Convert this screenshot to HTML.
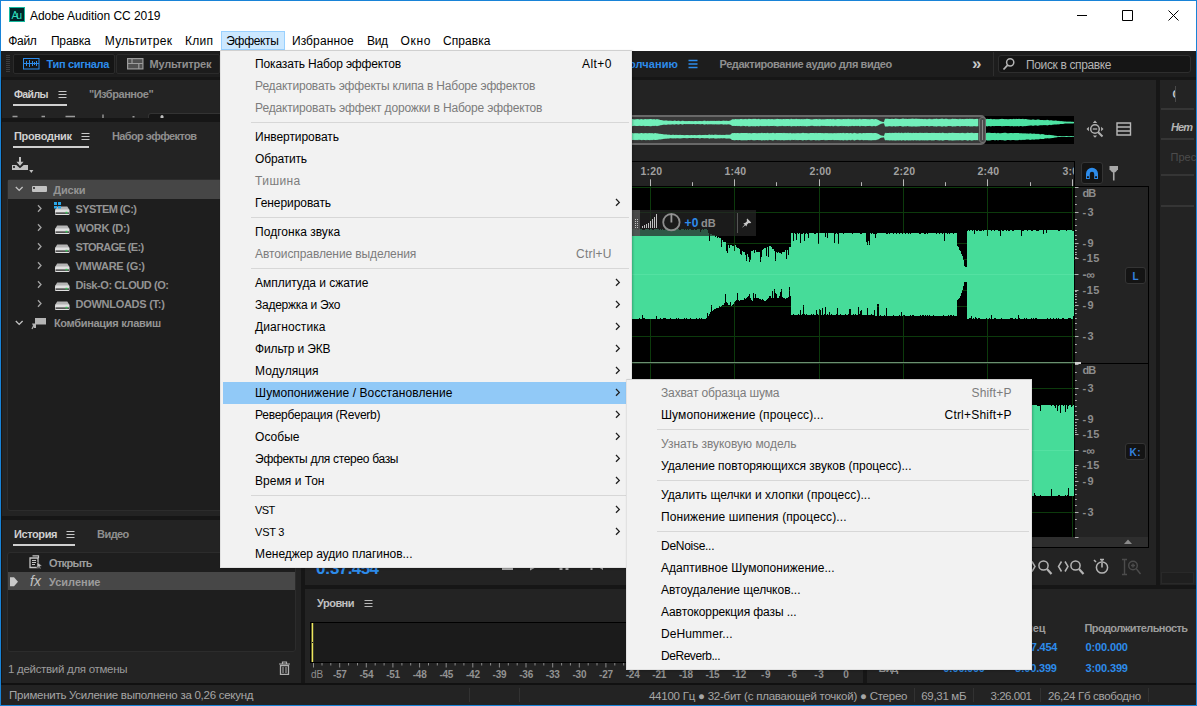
<!DOCTYPE html>
<html lang="ru"><head><meta charset="utf-8"><title>Adobe Audition CC 2019</title>
<style>
html,body{margin:0;padding:0;background:#161616;}
body{width:1197px;height:706px;overflow:hidden;font-family:"Liberation Sans",sans-serif;}
#app{position:relative;width:1197px;height:706px;overflow:hidden;background:#161616;}
#app div,#app svg,#app span.t{position:absolute;display:block;}
#app span.t{white-space:pre;line-height:1;}
#app div.clip{overflow:hidden;}

</style></head>
<body>
<div id="app">
<div style="left:0px;top:0px;width:1197px;height:51px;background:#ffffff;"></div>
<div style="left:9px;top:7px;width:16px;height:15px;background:#00262a;border:1px solid #15b89e;box-sizing:border-box;"></div>
<span class="t" style="left:11.50px;top:10.00px;font-size:10.5px;color:#2fdcbc;letter-spacing:-2.344px;">Au</span>
<span class="t" style="left:30.00px;top:10.00px;font-size:12px;color:#000;letter-spacing:-0.045px;">Adobe Audition CC 2019</span>
<svg style="left:1070px;top:5px;" width="118" height="20" viewBox="0 0 118 20"><path d="M7 10.500h10M52.500 5.500h10v10h-10zM98.500 5.500l10 10M108.500 5.500l-10 10" fill="none" stroke="#000" stroke-width="1"/></svg>
<div style="left:221px;top:31px;width:64px;height:19px;background:#cce8ff;border:1px solid #99d1ff;box-sizing:border-box;"></div>
<span class="t" style="left:8.30px;top:35.00px;font-size:12px;color:#000;letter-spacing:-0.339px;">Файл</span>
<span class="t" style="left:50.90px;top:35.00px;font-size:12px;color:#000;letter-spacing:-0.149px;">Правка</span>
<span class="t" style="left:104.80px;top:35.00px;font-size:12px;color:#000;letter-spacing:0.291px;">Мультитрек</span>
<span class="t" style="left:185.00px;top:35.00px;font-size:12px;color:#000;letter-spacing:0.266px;">Клип</span>
<span class="t" style="left:226.30px;top:35.00px;font-size:12px;color:#000;letter-spacing:-0.327px;">Эффекты</span>
<span class="t" style="left:291.90px;top:35.00px;font-size:12px;color:#000;letter-spacing:0.121px;">Избранное</span>
<span class="t" style="left:367.10px;top:35.00px;font-size:12px;color:#000;letter-spacing:-0.459px;">Вид</span>
<span class="t" style="left:400.50px;top:35.00px;font-size:12px;color:#000;letter-spacing:0.703px;">Окно</span>
<span class="t" style="left:443.00px;top:35.00px;font-size:12px;color:#000;letter-spacing:0.070px;">Справка</span>
<div style="left:1px;top:51px;width:1195px;height:654px;background:#161616;"></div>
<div style="left:1px;top:51px;width:1195px;height:26px;background:#1d1d1d;"></div>
<svg style="left:5px;top:54px;" width="6" height="20" viewBox="0 0 6 20"><path d="M1 1.5h4M1 3.5h4M1 5.5h4M1 7.5h4M1 9.5h4M1 11.5h4M1 13.5h4M1 15.5h4M1 17.5h4" stroke="#3c3c3c" stroke-width="1"/></svg>
<div style="left:13px;top:54px;width:102px;height:20px;background:#151515;border:1px solid #2b2b2b;border-radius:2px;box-sizing:border-box;"></div>
<div style="left:116px;top:54px;width:104px;height:20px;background:#1c1c1c;border:1px solid #2b2b2b;border-radius:2px;box-sizing:border-box;"></div>
<svg style="left:23px;top:58px;" width="17" height="12" viewBox="0 0 17 12"><rect x="0.5" y="0.5" width="15.5" height="10.5" fill="none" stroke="#2d8ceb"/><path d="M1 5.5h15M3.5 3v5M6.5 2v7M9.5 3v5M11.5 4v3M13.5 3v5" stroke="#2d8ceb" stroke-width="1" fill="none"/></svg>
<span class="t" style="left:46.50px;top:59.00px;font-size:11px;color:#2d8ceb;font-weight:700;letter-spacing:-0.329px;">Тип сигнала</span>
<svg style="left:127px;top:58px;" width="17" height="12" viewBox="0 0 17 12"><rect x="0.600" y="0.600" width="15.300" height="10.300" fill="#505050" stroke="#9c9c9c" stroke-width="1.200"/><path d="M0.600 5.500h15.300M5 0.600v4.900M11.800 5.500v5.400" stroke="#9c9c9c" stroke-width="1.200" fill="none"/></svg>
<span class="t" style="left:149.50px;top:59.00px;font-size:11px;color:#8f8f8f;font-weight:700;letter-spacing:-0.201px;">Мультитрек</span>
<span class="t" style="left:597.00px;top:59.00px;font-size:11px;color:#2d8ceb;font-weight:700;letter-spacing:0.070px;">По умолчанию</span>
<svg style="left:688px;top:59px;" width="10" height="10" viewBox="0 0 10 10"><path d="M0.5 1.5h9M0.5 5h9M0.5 8.5h9" stroke="#2d8ceb" stroke-width="1.3"/></svg>
<span class="t" style="left:719.50px;top:59.00px;font-size:11px;color:#8f8f8f;font-weight:700;letter-spacing:-0.423px;">Редактирование аудио для видео</span>
<span class="t" style="left:972.10px;top:55.00px;font-size:17px;color:#c8c8c8;font-weight:700;">»</span>
<div style="left:993px;top:52px;width:1px;height:24px;background:#2e2e2e;"></div>
<div style="left:998px;top:55px;width:193px;height:18px;background:#151515;border:1px solid #2e2e2e;border-radius:3px;box-sizing:border-box;"></div>
<svg style="left:1002px;top:57px;" width="14" height="14" viewBox="0 0 14 14"><circle cx="8.2" cy="5.3" r="3.6" fill="none" stroke="#b4b4b4" stroke-width="1.5"/><path d="M5.6 8.2L1.5 12.5" stroke="#b4b4b4" stroke-width="1.8"/></svg>
<span class="t" style="left:1026.00px;top:59.00px;font-size:12px;color:#b4b4b4;letter-spacing:-0.363px;">Поиск в справке</span>
<div style="left:2px;top:80px;width:299px;height:38px;background:#232323;"></div>
<span class="t" style="left:13.90px;top:89.00px;font-size:10.5px;color:#d0d0d0;font-weight:700;letter-spacing:-0.577px;">Файлы</span>
<svg style="left:57.5px;top:89.7px;" width="10" height="10" viewBox="0 0 10 10"><path d="M0.5 1.5h8M0.5 4.5h8M0.5 7.5h8" stroke="#c8c8c8" stroke-width="1"/></svg>
<span class="t" style="left:88.90px;top:89.00px;font-size:11px;color:#8f8f8f;font-weight:700;letter-spacing:-0.450px;">"Избранное"</span>
<div style="left:13px;top:104px;width:54px;height:2px;background:#d0d0d0;"></div>
<div style="left:148px;top:113px;width:154px;height:5px;background:#161616;border:1px solid #333;border-bottom:0;border-radius:3px 3px 0 0;box-sizing:border-box;"></div>
<svg style="left:10px;top:113px;" width="160" height="5" viewBox="0 0 160 5"><path d="M2.500 3.500h5M31.500 3.500h3.500M55.500 3.500h9.500M93 1.500v3.500M122.500 3.800h2" stroke="#9a9a9a" stroke-width="1.400"/><path d="M150.500 5v-1.500a1.500 1.500 0 0 1 3 0V5z" fill="#c0c0c0"/></svg>
<div style="left:2px;top:122px;width:299px;height:394px;background:#232323;"></div>
<span class="t" style="left:13.90px;top:131.00px;font-size:11px;color:#d0d0d0;font-weight:700;letter-spacing:-0.292px;">Проводник</span>
<svg style="left:80.5px;top:132px;" width="10" height="10" viewBox="0 0 10 10"><path d="M0.5 1.5h8M0.5 4.5h8M0.5 7.5h8" stroke="#c8c8c8" stroke-width="1"/></svg>
<span class="t" style="left:111.90px;top:131.00px;font-size:11px;color:#8f8f8f;font-weight:700;letter-spacing:-0.592px;">Набор эффектов</span>
<div style="left:13px;top:146px;width:76px;height:2px;background:#d0d0d0;"></div>
<svg style="left:11px;top:156px;" width="24" height="18" viewBox="0 0 24 18"><path d="M9 1v7" stroke="#c0c0c0" stroke-width="2" fill="none"/><path d="M5.500 5.700h7L9 9.900z" fill="#c0c0c0"/><path d="M1 8.900h4.300L9 12.200l3.700-3.300H17V14H1z" fill="#c0c0c0"/><rect x="2" y="10" width="2" height="2" fill="#3a3a3a"/><path d="M18.200 14h4.200l-2.100 3z" fill="#c0c0c0"/></svg>
<div style="left:7px;top:179px;width:289px;height:332px;background:#1e1e1e;border:1px solid #2c2c2c;border-radius:3px;box-sizing:border-box;"></div>
<div style="left:8px;top:180px;width:287px;height:19px;background:#464646;"></div>
<svg style="left:14.5px;top:186px;" width="9" height="6" viewBox="0 0 9 6"><path d="M0.800 1l3.400 3.400L7.600 1" fill="none" stroke="#c4c4c4" stroke-width="1.300"/></svg>
<div style="left:32px;top:186px;width:15px;height:6px;background:#c2c2c2;border-radius:1px;"></div>
<div style="left:33px;top:187px;width:2px;height:2px;background:#4a4a4a;"></div>
<span class="t" style="left:53.30px;top:185.00px;font-size:11px;color:#949494;font-weight:700;letter-spacing:-0.196px;">Диски</span>
<svg style="left:37px;top:204px;" width="6" height="9" viewBox="0 0 6 9"><path d="M1 1.200l3 3.300L1 7.800" fill="none" stroke="#a4a4a4" stroke-width="1.300"/></svg>
<svg style="left:55px;top:206px;" width="16" height="11" viewBox="0 0 16 11"><path d="M2.200 0.500h10.100l2.200 3.500H0z" fill="#b4b4b4"/><rect x="0" y="3.500" width="14.500" height="5.500" rx="1" fill="#e0e0e0"/><rect x="0.500" y="6.300" width="13.500" height="1.700" fill="#555"/><rect x="10.500" y="5.800" width="2" height="1.600" fill="#35c455"/></svg>
<svg style="left:54px;top:202px;" width="8" height="7" viewBox="0 0 8 7"><path d="M0 0h3v3H0zM4 0h3v3H4zM0 4h3v2.5H0zM4 4h3v2.5H4z" fill="#2aa7e8"/></svg>
<span class="t" style="left:75.50px;top:204.00px;font-size:11px;color:#949494;font-weight:700;letter-spacing:-0.573px;">SYSTEM (C:)</span>
<svg style="left:37px;top:223px;" width="6" height="9" viewBox="0 0 6 9"><path d="M1 1.200l3 3.300L1 7.800" fill="none" stroke="#a4a4a4" stroke-width="1.300"/></svg>
<svg style="left:55px;top:225px;" width="16" height="11" viewBox="0 0 16 11"><path d="M2.200 0.500h10.100l2.200 3.500H0z" fill="#b4b4b4"/><rect x="0" y="3.500" width="14.500" height="5.500" rx="1" fill="#e0e0e0"/><rect x="0.500" y="6.300" width="13.500" height="1.700" fill="#555"/><rect x="10.500" y="5.800" width="2" height="1.600" fill="#35c455"/></svg>
<span class="t" style="left:75.50px;top:223.00px;font-size:11px;color:#949494;font-weight:700;letter-spacing:-0.291px;">WORK (D:)</span>
<svg style="left:37px;top:242px;" width="6" height="9" viewBox="0 0 6 9"><path d="M1 1.200l3 3.300L1 7.800" fill="none" stroke="#a4a4a4" stroke-width="1.300"/></svg>
<svg style="left:55px;top:244px;" width="16" height="11" viewBox="0 0 16 11"><path d="M2.200 0.500h10.100l2.200 3.500H0z" fill="#b4b4b4"/><rect x="0" y="3.500" width="14.500" height="5.500" rx="1" fill="#e0e0e0"/><rect x="0.500" y="6.300" width="13.500" height="1.700" fill="#555"/><rect x="10.500" y="5.800" width="2" height="1.600" fill="#35c455"/></svg>
<span class="t" style="left:75.50px;top:242.00px;font-size:11px;color:#949494;font-weight:700;letter-spacing:-0.634px;">STORAGE (E:)</span>
<svg style="left:37px;top:261px;" width="6" height="9" viewBox="0 0 6 9"><path d="M1 1.200l3 3.300L1 7.800" fill="none" stroke="#a4a4a4" stroke-width="1.300"/></svg>
<svg style="left:55px;top:263px;" width="16" height="11" viewBox="0 0 16 11"><path d="M2.200 0.500h10.100l2.200 3.500H0z" fill="#b4b4b4"/><rect x="0" y="3.500" width="14.500" height="5.500" rx="1" fill="#e0e0e0"/><rect x="0.500" y="6.300" width="13.500" height="1.700" fill="#555"/><rect x="10.500" y="5.800" width="2" height="1.600" fill="#35c455"/></svg>
<span class="t" style="left:75.50px;top:261.00px;font-size:11px;color:#949494;font-weight:700;letter-spacing:-0.261px;">VMWARE (G:)</span>
<svg style="left:37px;top:280px;" width="6" height="9" viewBox="0 0 6 9"><path d="M1 1.200l3 3.300L1 7.800" fill="none" stroke="#a4a4a4" stroke-width="1.300"/></svg>
<svg style="left:55px;top:282px;" width="16" height="11" viewBox="0 0 16 11"><path d="M2.200 0.500h10.100l2.200 3.500H0z" fill="#b4b4b4"/><rect x="0" y="3.500" width="14.500" height="5.500" rx="1" fill="#e0e0e0"/><rect x="0.500" y="6.300" width="13.500" height="1.700" fill="#555"/><rect x="10.500" y="5.800" width="2" height="1.600" fill="#35c455"/></svg>
<span class="t" style="left:75.50px;top:280.00px;font-size:11px;color:#949494;font-weight:700;letter-spacing:-0.421px;">Disk-O: CLOUD (O:</span>
<svg style="left:37px;top:299px;" width="6" height="9" viewBox="0 0 6 9"><path d="M1 1.200l3 3.300L1 7.800" fill="none" stroke="#a4a4a4" stroke-width="1.300"/></svg>
<svg style="left:55px;top:301px;" width="16" height="11" viewBox="0 0 16 11"><path d="M2.200 0.500h10.100l2.200 3.500H0z" fill="#b4b4b4"/><rect x="0" y="3.500" width="14.500" height="5.500" rx="1" fill="#e0e0e0"/><rect x="0.500" y="6.300" width="13.500" height="1.700" fill="#555"/><rect x="10.500" y="5.800" width="2" height="1.600" fill="#35c455"/></svg>
<span class="t" style="left:75.50px;top:299.00px;font-size:11px;color:#949494;font-weight:700;letter-spacing:-0.275px;">DOWNLOADS (T:)</span>
<svg style="left:14.5px;top:320px;" width="9" height="6" viewBox="0 0 9 6"><path d="M0.800 1l3.400 3.400L7.600 1" fill="none" stroke="#c4c4c4" stroke-width="1.300"/></svg>
<svg style="left:31px;top:317px;" width="16" height="13" viewBox="0 0 16 13"><rect x="4" y="1" width="11" height="6.5" fill="#b4b4b4"/><path d="M1 6.5l4 0 0 4.5-2 0z" fill="#b4b4b4"/><path d="M1 12l1.5-3" stroke="#b4b4b4" stroke-width="1.3"/></svg>
<span class="t" style="left:53.90px;top:318.00px;font-size:11px;color:#949494;font-weight:700;letter-spacing:-0.303px;">Комбинация клавиш</span>
<div style="left:2px;top:520px;width:299px;height:163px;background:#232323;"></div>
<span class="t" style="left:13.90px;top:529.00px;font-size:11px;color:#d0d0d0;font-weight:700;letter-spacing:-0.382px;">История</span>
<svg style="left:66px;top:530px;" width="10" height="10" viewBox="0 0 10 10"><path d="M0.5 1.5h8M0.5 4.5h8M0.5 7.5h8" stroke="#c8c8c8" stroke-width="1"/></svg>
<span class="t" style="left:97.10px;top:529.00px;font-size:11px;color:#8f8f8f;font-weight:700;letter-spacing:-0.583px;">Видео</span>
<div style="left:13px;top:544px;width:62px;height:2px;background:#d0d0d0;"></div>
<div style="left:7px;top:552px;width:289px;height:100px;background:#1e1e1e;border:1px solid #2c2c2c;border-radius:3px;box-sizing:border-box;"></div>
<div style="left:8px;top:572px;width:287px;height:18px;background:#474747;"></div>
<svg style="left:29px;top:555px;" width="14" height="14" viewBox="0 0 14 14"><path d="M3.5 0.8h6v2.4" fill="none" stroke="#c4c4c4" stroke-width="1.2"/><path d="M1 3h8v9.5H1z" fill="none" stroke="#c4c4c4" stroke-width="1.3"/><path d="M3 5.5h4M3 7.5h4M3 9.5h3" stroke="#c4c4c4" stroke-width="1"/><path d="M8 7l5.2 4-2.4.3 1.2 2.2-1 .5-1.2-2.3L8 13z" fill="#c4c4c4" stroke="#1e1e1e" stroke-width="0.5"/></svg>
<span class="t" style="left:49.10px;top:558.00px;font-size:11px;color:#9c9c9c;font-weight:700;letter-spacing:-0.720px;">Открыть</span>
<svg style="left:10px;top:576.5px;" width="10" height="10" viewBox="0 0 10 10"><path d="M0 0.300h4L8 4.700 4 9.200H0z" fill="#c9c9c9"/></svg>
<span class="t" style="left:30.00px;top:574.00px;font-size:14px;color:#c0c0c0;font-style:italic;letter-spacing:0.109px;font-family:"Liberation Serif",serif;">fx</span>
<span class="t" style="left:49.10px;top:577.00px;font-size:11px;color:#9c9c9c;font-weight:700;letter-spacing:-0.017px;">Усиление</span>
<span class="t" style="left:8.00px;top:664.00px;font-size:11.5px;color:#9c9c9c;letter-spacing:-0.298px;">1 действий для отмены</span>
<svg style="left:278px;top:661px;" width="14" height="15" viewBox="0 0 14 15"><path d="M1 3h11M4.5 2.5v-1.5h4v1.5" fill="none" stroke="#b0b0b0" stroke-width="1.2"/><path d="M2.5 4.5h8v8.8h-8z" fill="none" stroke="#b0b0b0" stroke-width="1.3"/><path d="M5 6v6M8 6v6" stroke="#b0b0b0" stroke-width="1"/></svg>
<div style="left:305px;top:80px;width:851px;height:505px;background:#232323;"></div>
<div style="left:311px;top:116px;width:763px;height:28px;background:#000;"></div>
<svg style="left:0px;top:0px;" width="1197" height="160" viewBox="0 0 1197 160"><path d="M632.0 119.3 L633.0 119.5 L634.0 119.1 L635.0 119.5 L636.0 119.2 L637.0 119.3 L638.0 119.5 L639.0 119.2 L640.0 119.5 L641.0 119.3 L642.0 119.5 L643.0 119.5 L644.0 119.3 L645.0 119.0 L646.0 119.5 L647.0 119.4 L648.0 119.1 L649.0 118.9 L650.0 119.2 L651.0 119.3 L652.0 118.9 L653.0 119.5 L654.0 119.0 L655.0 119.4 L656.0 119.5 L657.0 119.5 L658.0 119.6 L659.0 119.5 L660.0 120.1 L661.0 120.1 L662.0 120.1 L663.0 120.4 L664.0 120.4 L665.0 120.8 L666.0 120.8 L667.0 120.8 L668.0 120.6 L669.0 120.8 L670.0 120.9 L671.0 120.7 L672.0 120.8 L673.0 121.0 L674.0 120.7 L675.0 120.8 L676.0 121.0 L677.0 120.9 L678.0 120.9 L679.0 120.7 L680.0 120.9 L681.0 121.1 L682.0 120.8 L683.0 121.3 L684.0 121.1 L685.0 121.0 L686.0 121.3 L687.0 121.1 L688.0 121.4 L689.0 121.1 L690.0 121.1 L691.0 121.1 L692.0 121.0 L693.0 121.2 L694.0 121.0 L695.0 121.0 L696.0 121.0 L697.0 121.1 L698.0 120.8 L699.0 120.8 L700.0 121.0 L701.0 120.9 L702.0 121.2 L703.0 120.8 L704.0 120.8 L705.0 120.6 L706.0 120.7 L707.0 121.0 L708.0 121.0 L709.0 120.8 L710.0 121.2 L711.0 120.9 L712.0 121.1 L713.0 121.1 L714.0 121.1 L715.0 120.7 L716.0 121.1 L717.0 121.0 L718.0 120.9 L719.0 120.6 L720.0 121.1 L721.0 120.9 L722.0 120.8 L723.0 120.6 L724.0 120.6 L725.0 120.6 L726.0 121.0 L727.0 120.9 L728.0 120.9 L729.0 120.6 L730.0 120.5 L731.0 120.2 L732.0 119.3 L733.0 119.3 L734.0 119.3 L735.0 119.1 L736.0 119.1 L737.0 119.3 L738.0 119.4 L739.0 119.2 L740.0 119.2 L741.0 119.1 L742.0 118.8 L743.0 119.0 L744.0 119.1 L745.0 119.0 L746.0 119.0 L747.0 119.4 L748.0 118.9 L749.0 118.9 L750.0 118.9 L751.0 118.9 L752.0 119.2 L753.0 119.2 L754.0 119.4 L755.0 119.0 L756.0 119.4 L757.0 119.4 L758.0 119.3 L759.0 119.3 L760.0 119.2 L761.0 119.4 L762.0 119.4 L763.0 119.4 L764.0 119.4 L765.0 119.2 L766.0 119.4 L767.0 118.9 L768.0 119.1 L769.0 119.4 L770.0 119.3 L771.0 119.2 L772.0 119.2 L773.0 119.4 L774.0 118.9 L775.0 118.8 L776.0 119.1 L777.0 119.1 L778.0 119.4 L779.0 119.4 L780.0 119.2 L781.0 119.3 L782.0 118.9 L783.0 119.3 L784.0 119.4 L785.0 118.8 L786.0 119.1 L787.0 119.4 L788.0 119.1 L789.0 119.4 L790.0 119.1 L791.0 118.8 L792.0 118.9 L793.0 119.0 L794.0 119.3 L795.0 119.2 L796.0 119.3 L797.0 118.9 L798.0 119.1 L799.0 118.9 L800.0 119.2 L801.0 119.3 L802.0 118.9 L803.0 118.8 L804.0 118.9 L805.0 118.9 L806.0 118.9 L807.0 119.0 L808.0 119.3 L809.0 119.1 L810.0 119.2 L811.0 119.4 L812.0 119.4 L813.0 119.3 L814.0 119.3 L815.0 119.0 L816.0 118.8 L817.0 119.2 L818.0 118.8 L819.0 118.8 L820.0 118.8 L821.0 119.2 L822.0 119.3 L823.0 119.3 L824.0 119.3 L825.0 119.3 L826.0 119.0 L827.0 118.9 L828.0 118.9 L829.0 119.1 L830.0 119.0 L831.0 118.9 L832.0 119.4 L833.0 119.0 L834.0 118.9 L835.0 118.9 L836.0 119.0 L837.0 119.1 L838.0 119.3 L839.0 118.9 L840.0 119.2 L841.0 118.9 L842.0 118.8 L843.0 119.2 L844.0 119.2 L845.0 118.8 L846.0 119.0 L847.0 119.3 L848.0 119.4 L849.0 119.4 L850.0 118.9 L851.0 118.9 L852.0 119.4 L853.0 118.9 L854.0 118.8 L855.0 119.0 L856.0 119.2 L857.0 119.1 L858.0 119.4 L859.0 119.4 L860.0 118.8 L861.0 119.0 L862.0 119.1 L863.0 118.8 L864.0 119.2 L865.0 118.9 L866.0 118.9 L867.0 119.3 L868.0 119.3 L869.0 119.3 L870.0 119.3 L871.0 119.1 L872.0 119.3 L873.0 119.2 L874.0 119.4 L875.0 118.9 L876.0 119.2 L877.0 119.6 L878.0 119.9 L879.0 120.1 L880.0 120.9 L881.0 121.0 L882.0 121.7 L883.0 121.7 L884.0 121.8 L885.0 119.2 L886.0 119.0 L887.0 119.1 L888.0 119.2 L889.0 118.7 L890.0 119.1 L891.0 118.9 L892.0 118.8 L893.0 118.9 L894.0 119.0 L895.0 118.9 L896.0 118.9 L897.0 118.7 L898.0 119.2 L899.0 118.9 L900.0 119.1 L901.0 119.1 L902.0 118.8 L903.0 118.9 L904.0 118.9 L905.0 118.8 L906.0 118.7 L907.0 119.0 L908.0 118.9 L909.0 118.9 L910.0 118.9 L911.0 118.8 L912.0 119.0 L913.0 118.9 L914.0 119.0 L915.0 118.7 L916.0 118.8 L917.0 118.7 L918.0 118.7 L919.0 119.1 L920.0 118.9 L921.0 118.7 L922.0 118.7 L923.0 119.2 L924.0 119.2 L925.0 119.0 L926.0 119.2 L927.0 119.1 L928.0 119.2 L929.0 118.8 L930.0 118.8 L931.0 118.7 L932.0 119.2 L933.0 118.8 L934.0 118.9 L935.0 119.2 L936.0 118.7 L937.0 118.7 L938.0 119.1 L939.0 118.7 L940.0 119.0 L941.0 119.0 L942.0 118.6 L943.0 118.8 L944.0 119.2 L945.0 119.0 L946.0 119.0 L947.0 119.1 L948.0 119.2 L949.0 119.1 L950.0 118.8 L951.0 119.3 L952.0 118.9 L953.0 119.0 L954.0 119.3 L955.0 119.1 L956.0 118.9 L957.0 119.0 L958.0 119.3 L959.0 118.7 L960.0 118.8 L961.0 118.7 L962.0 119.2 L963.0 119.1 L964.0 119.3 L965.0 118.8 L966.0 119.1 L967.0 119.2 L968.0 119.0 L969.0 118.7 L970.0 118.8 L971.0 119.1 L972.0 119.2 L973.0 118.7 L974.0 118.9 L975.0 118.9 L976.0 119.3 L977.0 119.3 L978.0 118.9 L979.0 119.0 L980.0 119.3 L981.0 118.7 L982.0 118.9 L983.0 118.8 L984.0 119.3 L985.0 118.8 L986.0 119.3 L987.0 118.8 L988.0 119.0 L989.0 119.1 L990.0 119.0 L991.0 118.7 L992.0 119.2 L993.0 119.2 L994.0 119.0 L995.0 119.2 L996.0 119.3 L997.0 119.2 L998.0 119.3 L999.0 119.2 L1000.0 119.1 L1001.0 119.1 L1002.0 118.8 L1003.0 119.1 L1004.0 119.0 L1005.0 119.2 L1006.0 119.1 L1007.0 119.3 L1008.0 119.2 L1009.0 119.3 L1010.0 118.9 L1011.0 119.0 L1012.0 119.2 L1013.0 119.0 L1014.0 118.7 L1015.0 119.3 L1016.0 118.8 L1017.0 119.1 L1018.0 119.0 L1019.0 118.8 L1020.0 119.1 L1021.0 119.1 L1022.0 119.0 L1023.0 118.8 L1024.0 119.3 L1025.0 119.0 L1026.0 119.1 L1027.0 119.2 L1028.0 119.4 L1029.0 119.4 L1030.0 119.7 L1031.0 119.7 L1032.0 119.7 L1033.0 119.3 L1034.0 119.7 L1035.0 119.8 L1036.0 119.9 L1037.0 119.4 L1038.0 119.4 L1039.0 119.6 L1040.0 119.9 L1041.0 119.9 L1042.0 120.0 L1043.0 119.9 L1044.0 120.2 L1045.0 120.0 L1046.0 120.2 L1047.0 119.8 L1048.0 119.9 L1049.0 120.2 L1050.0 120.4 L1051.0 120.0 L1052.0 120.5 L1053.0 120.5 L1054.0 120.8 L1055.0 120.6 L1056.0 120.6 L1057.0 120.7 L1058.0 120.9 L1059.0 120.8 L1060.0 121.2 L1061.0 121.1 L1062.0 121.3 L1063.0 121.2 L1064.0 121.5 L1065.0 121.6 L1066.0 121.6 L1067.0 121.7 L1068.0 121.6 L1069.0 121.7 L1070.0 121.6 L1071.0 121.7 L1072.0 121.7 L1073.0 121.7 L1074.0 121.9 L1074.0 123.3 L1073.0 123.5 L1072.0 123.5 L1071.0 123.5 L1070.0 123.6 L1069.0 123.5 L1068.0 123.6 L1067.0 123.5 L1066.0 123.6 L1065.0 123.6 L1064.0 123.7 L1063.0 124.0 L1062.0 123.9 L1061.0 124.1 L1060.0 124.0 L1059.0 124.4 L1058.0 124.3 L1057.0 124.5 L1056.0 124.6 L1055.0 124.6 L1054.0 124.4 L1053.0 124.7 L1052.0 124.7 L1051.0 125.2 L1050.0 124.8 L1049.0 125.0 L1048.0 125.3 L1047.0 125.4 L1046.0 125.0 L1045.0 125.2 L1044.0 125.0 L1043.0 125.3 L1042.0 125.2 L1041.0 125.3 L1040.0 125.3 L1039.0 125.6 L1038.0 125.8 L1037.0 125.8 L1036.0 125.3 L1035.0 125.4 L1034.0 125.5 L1033.0 125.9 L1032.0 125.5 L1031.0 125.5 L1030.0 125.5 L1029.0 125.8 L1028.0 125.8 L1027.0 126.0 L1026.0 126.1 L1025.0 126.2 L1024.0 125.9 L1023.0 126.4 L1022.0 126.2 L1021.0 126.1 L1020.0 126.1 L1019.0 126.4 L1018.0 126.2 L1017.0 126.1 L1016.0 126.4 L1015.0 125.9 L1014.0 126.5 L1013.0 126.2 L1012.0 126.0 L1011.0 126.2 L1010.0 126.3 L1009.0 125.9 L1008.0 126.0 L1007.0 125.9 L1006.0 126.1 L1005.0 126.0 L1004.0 126.2 L1003.0 126.1 L1002.0 126.4 L1001.0 126.1 L1000.0 126.1 L999.0 126.0 L998.0 125.9 L997.0 126.0 L996.0 125.9 L995.0 126.0 L994.0 126.2 L993.0 126.0 L992.0 126.0 L991.0 126.5 L990.0 126.2 L989.0 126.1 L988.0 126.2 L987.0 126.4 L986.0 125.9 L985.0 126.4 L984.0 125.9 L983.0 126.4 L982.0 126.3 L981.0 126.5 L980.0 125.9 L979.0 126.2 L978.0 126.3 L977.0 125.9 L976.0 125.9 L975.0 126.3 L974.0 126.3 L973.0 126.5 L972.0 126.0 L971.0 126.1 L970.0 126.4 L969.0 126.5 L968.0 126.2 L967.0 126.0 L966.0 126.1 L965.0 126.4 L964.0 125.9 L963.0 126.1 L962.0 126.0 L961.0 126.5 L960.0 126.4 L959.0 126.5 L958.0 125.9 L957.0 126.2 L956.0 126.3 L955.0 126.1 L954.0 125.9 L953.0 126.2 L952.0 126.3 L951.0 125.9 L950.0 126.4 L949.0 126.1 L948.0 126.0 L947.0 126.1 L946.0 126.2 L945.0 126.2 L944.0 126.0 L943.0 126.4 L942.0 126.6 L941.0 126.2 L940.0 126.2 L939.0 126.5 L938.0 126.1 L937.0 126.5 L936.0 126.5 L935.0 126.0 L934.0 126.3 L933.0 126.4 L932.0 126.0 L931.0 126.5 L930.0 126.4 L929.0 126.4 L928.0 126.0 L927.0 126.1 L926.0 126.0 L925.0 126.2 L924.0 126.0 L923.0 126.0 L922.0 126.5 L921.0 126.5 L920.0 126.3 L919.0 126.1 L918.0 126.5 L917.0 126.5 L916.0 126.4 L915.0 126.5 L914.0 126.2 L913.0 126.3 L912.0 126.2 L911.0 126.4 L910.0 126.3 L909.0 126.3 L908.0 126.3 L907.0 126.2 L906.0 126.5 L905.0 126.4 L904.0 126.3 L903.0 126.3 L902.0 126.4 L901.0 126.1 L900.0 126.1 L899.0 126.3 L898.0 126.0 L897.0 126.5 L896.0 126.3 L895.0 126.3 L894.0 126.2 L893.0 126.3 L892.0 126.4 L891.0 126.3 L890.0 126.1 L889.0 126.5 L888.0 126.0 L887.0 126.1 L886.0 126.2 L885.0 126.0 L884.0 123.4 L883.0 123.5 L882.0 123.5 L881.0 124.2 L880.0 124.3 L879.0 125.1 L878.0 125.3 L877.0 125.6 L876.0 126.0 L875.0 126.3 L874.0 125.8 L873.0 126.0 L872.0 125.9 L871.0 126.1 L870.0 125.9 L869.0 125.9 L868.0 125.9 L867.0 125.9 L866.0 126.3 L865.0 126.3 L864.0 126.0 L863.0 126.4 L862.0 126.1 L861.0 126.2 L860.0 126.4 L859.0 125.8 L858.0 125.8 L857.0 126.1 L856.0 126.0 L855.0 126.2 L854.0 126.4 L853.0 126.3 L852.0 125.8 L851.0 126.3 L850.0 126.3 L849.0 125.8 L848.0 125.8 L847.0 125.9 L846.0 126.2 L845.0 126.4 L844.0 126.0 L843.0 126.0 L842.0 126.4 L841.0 126.3 L840.0 126.0 L839.0 126.3 L838.0 125.9 L837.0 126.1 L836.0 126.2 L835.0 126.3 L834.0 126.3 L833.0 126.2 L832.0 125.8 L831.0 126.3 L830.0 126.2 L829.0 126.1 L828.0 126.3 L827.0 126.3 L826.0 126.2 L825.0 125.9 L824.0 125.9 L823.0 125.9 L822.0 125.9 L821.0 126.0 L820.0 126.4 L819.0 126.4 L818.0 126.4 L817.0 126.0 L816.0 126.4 L815.0 126.2 L814.0 125.9 L813.0 125.9 L812.0 125.8 L811.0 125.8 L810.0 126.0 L809.0 126.1 L808.0 125.9 L807.0 126.2 L806.0 126.3 L805.0 126.3 L804.0 126.3 L803.0 126.4 L802.0 126.3 L801.0 125.9 L800.0 126.0 L799.0 126.3 L798.0 126.1 L797.0 126.3 L796.0 125.9 L795.0 126.0 L794.0 125.9 L793.0 126.2 L792.0 126.3 L791.0 126.4 L790.0 126.1 L789.0 125.8 L788.0 126.1 L787.0 125.8 L786.0 126.1 L785.0 126.4 L784.0 125.8 L783.0 125.9 L782.0 126.3 L781.0 125.9 L780.0 126.0 L779.0 125.8 L778.0 125.8 L777.0 126.1 L776.0 126.1 L775.0 126.4 L774.0 126.3 L773.0 125.8 L772.0 126.0 L771.0 126.0 L770.0 125.9 L769.0 125.8 L768.0 126.1 L767.0 126.3 L766.0 125.8 L765.0 126.0 L764.0 125.8 L763.0 125.8 L762.0 125.8 L761.0 125.8 L760.0 126.0 L759.0 125.9 L758.0 125.9 L757.0 125.8 L756.0 125.8 L755.0 126.2 L754.0 125.8 L753.0 126.0 L752.0 126.0 L751.0 126.3 L750.0 126.3 L749.0 126.3 L748.0 126.3 L747.0 125.8 L746.0 126.2 L745.0 126.2 L744.0 126.1 L743.0 126.2 L742.0 126.4 L741.0 126.1 L740.0 126.0 L739.0 126.0 L738.0 125.8 L737.0 125.9 L736.0 126.1 L735.0 126.1 L734.0 125.9 L733.0 125.9 L732.0 125.9 L731.0 125.0 L730.0 124.7 L729.0 124.6 L728.0 124.3 L727.0 124.3 L726.0 124.2 L725.0 124.6 L724.0 124.6 L723.0 124.6 L722.0 124.4 L721.0 124.3 L720.0 124.1 L719.0 124.6 L718.0 124.3 L717.0 124.2 L716.0 124.1 L715.0 124.5 L714.0 124.1 L713.0 124.1 L712.0 124.1 L711.0 124.3 L710.0 124.0 L709.0 124.4 L708.0 124.2 L707.0 124.2 L706.0 124.5 L705.0 124.6 L704.0 124.4 L703.0 124.4 L702.0 124.0 L701.0 124.3 L700.0 124.2 L699.0 124.4 L698.0 124.4 L697.0 124.1 L696.0 124.2 L695.0 124.2 L694.0 124.2 L693.0 124.0 L692.0 124.2 L691.0 124.1 L690.0 124.1 L689.0 124.1 L688.0 123.8 L687.0 124.1 L686.0 123.9 L685.0 124.2 L684.0 124.1 L683.0 123.9 L682.0 124.4 L681.0 124.1 L680.0 124.3 L679.0 124.5 L678.0 124.3 L677.0 124.3 L676.0 124.2 L675.0 124.4 L674.0 124.5 L673.0 124.2 L672.0 124.4 L671.0 124.5 L670.0 124.3 L669.0 124.4 L668.0 124.6 L667.0 124.4 L666.0 124.4 L665.0 124.4 L664.0 124.8 L663.0 124.8 L662.0 125.1 L661.0 125.1 L660.0 125.1 L659.0 125.7 L658.0 125.6 L657.0 125.7 L656.0 125.7 L655.0 125.8 L654.0 126.2 L653.0 125.7 L652.0 126.3 L651.0 125.9 L650.0 126.0 L649.0 126.3 L648.0 126.1 L647.0 125.8 L646.0 125.7 L645.0 126.2 L644.0 125.9 L643.0 125.7 L642.0 125.7 L641.0 125.9 L640.0 125.7 L639.0 126.0 L638.0 125.7 L637.0 125.9 L636.0 126.0 L635.0 125.7 L634.0 126.1 L633.0 125.7 L632.0 125.9Z" fill="#4de3a3"/><path d="M632.0 133.3 L633.0 132.9 L634.0 133.5 L635.0 133.1 L636.0 133.1 L637.0 133.5 L638.0 133.0 L639.0 133.0 L640.0 133.1 L641.0 133.1 L642.0 133.0 L643.0 133.5 L644.0 133.2 L645.0 133.2 L646.0 133.0 L647.0 133.0 L648.0 133.0 L649.0 133.2 L650.0 133.0 L651.0 133.1 L652.0 133.1 L653.0 133.4 L654.0 133.5 L655.0 133.5 L656.0 133.3 L657.0 133.5 L658.0 133.2 L659.0 133.6 L660.0 133.8 L661.0 134.0 L662.0 134.1 L663.0 134.3 L664.0 134.7 L665.0 134.3 L666.0 134.4 L667.0 134.6 L668.0 134.7 L669.0 134.6 L670.0 135.0 L671.0 134.6 L672.0 135.0 L673.0 135.1 L674.0 135.0 L675.0 134.7 L676.0 135.1 L677.0 134.8 L678.0 134.7 L679.0 135.0 L680.0 135.0 L681.0 135.0 L682.0 134.9 L683.0 134.9 L684.0 135.0 L685.0 135.0 L686.0 135.3 L687.0 135.3 L688.0 135.3 L689.0 135.1 L690.0 135.3 L691.0 135.1 L692.0 135.4 L693.0 135.4 L694.0 135.2 L695.0 135.0 L696.0 135.0 L697.0 135.0 L698.0 135.1 L699.0 135.0 L700.0 135.0 L701.0 135.0 L702.0 135.2 L703.0 134.7 L704.0 135.1 L705.0 134.6 L706.0 134.6 L707.0 135.2 L708.0 134.9 L709.0 134.7 L710.0 134.6 L711.0 134.9 L712.0 135.0 L713.0 135.1 L714.0 134.6 L715.0 135.0 L716.0 134.8 L717.0 135.1 L718.0 134.8 L719.0 134.6 L720.0 135.1 L721.0 134.7 L722.0 134.8 L723.0 134.6 L724.0 134.7 L725.0 135.0 L726.0 134.6 L727.0 134.8 L728.0 135.1 L729.0 135.1 L730.0 134.8 L731.0 134.0 L732.0 133.3 L733.0 133.4 L734.0 133.2 L735.0 133.2 L736.0 132.9 L737.0 133.4 L738.0 133.0 L739.0 132.9 L740.0 133.4 L741.0 132.8 L742.0 133.0 L743.0 132.9 L744.0 133.3 L745.0 133.2 L746.0 133.2 L747.0 132.8 L748.0 133.1 L749.0 133.2 L750.0 133.2 L751.0 133.3 L752.0 133.4 L753.0 133.4 L754.0 132.9 L755.0 133.3 L756.0 132.8 L757.0 133.3 L758.0 133.3 L759.0 133.1 L760.0 133.3 L761.0 133.2 L762.0 132.8 L763.0 132.9 L764.0 132.9 L765.0 133.0 L766.0 132.9 L767.0 132.8 L768.0 133.1 L769.0 133.0 L770.0 133.4 L771.0 133.0 L772.0 133.2 L773.0 133.0 L774.0 133.0 L775.0 133.3 L776.0 133.4 L777.0 132.8 L778.0 133.4 L779.0 133.1 L780.0 133.2 L781.0 133.3 L782.0 133.0 L783.0 132.8 L784.0 133.3 L785.0 133.0 L786.0 133.3 L787.0 133.1 L788.0 133.2 L789.0 133.3 L790.0 133.3 L791.0 133.3 L792.0 132.9 L793.0 133.1 L794.0 133.3 L795.0 132.9 L796.0 132.8 L797.0 133.2 L798.0 133.4 L799.0 133.3 L800.0 133.4 L801.0 133.2 L802.0 133.4 L803.0 133.3 L804.0 133.3 L805.0 133.1 L806.0 132.9 L807.0 133.0 L808.0 133.2 L809.0 133.2 L810.0 133.1 L811.0 133.2 L812.0 133.2 L813.0 133.4 L814.0 133.3 L815.0 132.8 L816.0 133.4 L817.0 133.1 L818.0 133.0 L819.0 132.9 L820.0 133.3 L821.0 133.3 L822.0 133.3 L823.0 133.2 L824.0 133.2 L825.0 132.8 L826.0 132.9 L827.0 132.9 L828.0 133.4 L829.0 133.4 L830.0 133.0 L831.0 132.9 L832.0 133.1 L833.0 133.1 L834.0 133.4 L835.0 133.2 L836.0 132.8 L837.0 132.9 L838.0 132.9 L839.0 132.8 L840.0 133.3 L841.0 133.4 L842.0 133.3 L843.0 133.1 L844.0 133.0 L845.0 132.8 L846.0 133.0 L847.0 133.0 L848.0 133.0 L849.0 133.2 L850.0 133.1 L851.0 133.4 L852.0 132.9 L853.0 133.3 L854.0 132.9 L855.0 133.0 L856.0 133.3 L857.0 133.4 L858.0 133.3 L859.0 133.0 L860.0 133.0 L861.0 133.4 L862.0 133.4 L863.0 133.1 L864.0 133.1 L865.0 133.2 L866.0 133.3 L867.0 133.1 L868.0 133.4 L869.0 133.3 L870.0 133.2 L871.0 132.8 L872.0 133.0 L873.0 132.9 L874.0 133.1 L875.0 133.3 L876.0 133.3 L877.0 133.2 L878.0 133.8 L879.0 134.5 L880.0 135.1 L881.0 135.2 L882.0 135.6 L883.0 135.8 L884.0 135.9 L885.0 132.8 L886.0 132.6 L887.0 133.1 L888.0 133.2 L889.0 133.0 L890.0 133.0 L891.0 132.8 L892.0 133.1 L893.0 132.7 L894.0 132.8 L895.0 132.9 L896.0 133.1 L897.0 132.6 L898.0 133.1 L899.0 132.7 L900.0 133.1 L901.0 133.1 L902.0 132.8 L903.0 133.1 L904.0 132.6 L905.0 132.9 L906.0 133.1 L907.0 133.1 L908.0 133.0 L909.0 132.8 L910.0 132.7 L911.0 133.2 L912.0 133.0 L913.0 133.1 L914.0 132.6 L915.0 133.2 L916.0 133.2 L917.0 133.2 L918.0 133.0 L919.0 132.7 L920.0 132.7 L921.0 132.8 L922.0 132.6 L923.0 132.7 L924.0 133.1 L925.0 133.2 L926.0 132.7 L927.0 132.8 L928.0 133.3 L929.0 132.9 L930.0 133.0 L931.0 133.0 L932.0 133.1 L933.0 133.2 L934.0 133.3 L935.0 133.1 L936.0 133.1 L937.0 132.7 L938.0 133.2 L939.0 132.7 L940.0 133.2 L941.0 133.1 L942.0 132.8 L943.0 132.8 L944.0 133.0 L945.0 133.3 L946.0 133.0 L947.0 133.1 L948.0 132.7 L949.0 133.2 L950.0 133.1 L951.0 132.7 L952.0 133.3 L953.0 133.0 L954.0 132.8 L955.0 132.8 L956.0 133.3 L957.0 133.3 L958.0 133.3 L959.0 132.7 L960.0 133.1 L961.0 132.8 L962.0 132.7 L963.0 133.1 L964.0 133.1 L965.0 132.7 L966.0 132.9 L967.0 133.1 L968.0 132.8 L969.0 133.1 L970.0 133.1 L971.0 133.3 L972.0 132.8 L973.0 132.7 L974.0 132.9 L975.0 132.7 L976.0 133.3 L977.0 133.2 L978.0 133.0 L979.0 132.7 L980.0 132.7 L981.0 133.1 L982.0 133.2 L983.0 133.0 L984.0 133.0 L985.0 132.7 L986.0 133.2 L987.0 132.8 L988.0 132.8 L989.0 132.8 L990.0 132.8 L991.0 132.9 L992.0 133.1 L993.0 133.1 L994.0 133.1 L995.0 132.8 L996.0 133.3 L997.0 133.2 L998.0 132.8 L999.0 133.2 L1000.0 133.3 L1001.0 133.3 L1002.0 133.0 L1003.0 133.1 L1004.0 132.7 L1005.0 132.8 L1006.0 132.7 L1007.0 133.2 L1008.0 133.3 L1009.0 133.3 L1010.0 133.0 L1011.0 132.9 L1012.0 133.1 L1013.0 133.2 L1014.0 133.1 L1015.0 132.9 L1016.0 132.9 L1017.0 132.9 L1018.0 132.9 L1019.0 133.1 L1020.0 133.4 L1021.0 133.0 L1022.0 133.4 L1023.0 133.3 L1024.0 133.4 L1025.0 133.2 L1026.0 133.6 L1027.0 133.6 L1028.0 133.6 L1029.0 133.7 L1030.0 133.3 L1031.0 133.5 L1032.0 133.7 L1033.0 133.7 L1034.0 133.4 L1035.0 133.7 L1036.0 134.0 L1037.0 133.7 L1038.0 133.9 L1039.0 133.8 L1040.0 134.4 L1041.0 134.3 L1042.0 134.1 L1043.0 134.2 L1044.0 134.2 L1045.0 134.9 L1046.0 134.8 L1047.0 135.0 L1048.0 135.0 L1049.0 134.7 L1050.0 135.0 L1051.0 134.9 L1052.0 135.3 L1053.0 135.2 L1054.0 135.5 L1055.0 135.7 L1056.0 135.7 L1057.0 135.9 L1058.0 136.2 L1059.0 136.1 L1060.0 136.1 L1061.0 136.2 L1062.0 136.2 L1063.0 136.2 L1064.0 136.2 L1065.0 136.2 L1066.0 136.1 L1067.0 136.1 L1068.0 136.2 L1069.0 136.2 L1070.0 136.2 L1071.0 136.1 L1072.0 136.2 L1073.0 136.2 L1074.0 136.2 L1074.0 137.0 L1073.0 137.0 L1072.0 137.0 L1071.0 137.1 L1070.0 137.0 L1069.0 137.0 L1068.0 137.0 L1067.0 137.1 L1066.0 137.1 L1065.0 137.0 L1064.0 137.0 L1063.0 137.0 L1062.0 137.0 L1061.0 137.0 L1060.0 137.1 L1059.0 137.1 L1058.0 137.0 L1057.0 137.3 L1056.0 137.5 L1055.0 137.5 L1054.0 137.7 L1053.0 138.0 L1052.0 137.9 L1051.0 138.3 L1050.0 138.2 L1049.0 138.5 L1048.0 138.2 L1047.0 138.2 L1046.0 138.4 L1045.0 138.3 L1044.0 139.0 L1043.0 139.0 L1042.0 139.1 L1041.0 138.9 L1040.0 138.8 L1039.0 139.4 L1038.0 139.3 L1037.0 139.5 L1036.0 139.2 L1035.0 139.5 L1034.0 139.8 L1033.0 139.5 L1032.0 139.5 L1031.0 139.7 L1030.0 139.9 L1029.0 139.5 L1028.0 139.6 L1027.0 139.6 L1026.0 139.6 L1025.0 140.0 L1024.0 139.8 L1023.0 139.9 L1022.0 139.8 L1021.0 140.2 L1020.0 139.8 L1019.0 140.1 L1018.0 140.3 L1017.0 140.3 L1016.0 140.3 L1015.0 140.3 L1014.0 140.1 L1013.0 140.0 L1012.0 140.1 L1011.0 140.3 L1010.0 140.2 L1009.0 139.9 L1008.0 139.9 L1007.0 140.0 L1006.0 140.5 L1005.0 140.4 L1004.0 140.5 L1003.0 140.1 L1002.0 140.2 L1001.0 139.9 L1000.0 139.9 L999.0 140.0 L998.0 140.4 L997.0 140.0 L996.0 139.9 L995.0 140.4 L994.0 140.1 L993.0 140.1 L992.0 140.1 L991.0 140.3 L990.0 140.4 L989.0 140.4 L988.0 140.4 L987.0 140.4 L986.0 140.0 L985.0 140.5 L984.0 140.2 L983.0 140.2 L982.0 140.0 L981.0 140.1 L980.0 140.5 L979.0 140.5 L978.0 140.2 L977.0 140.0 L976.0 139.9 L975.0 140.5 L974.0 140.3 L973.0 140.5 L972.0 140.4 L971.0 139.9 L970.0 140.1 L969.0 140.1 L968.0 140.4 L967.0 140.1 L966.0 140.3 L965.0 140.5 L964.0 140.1 L963.0 140.1 L962.0 140.5 L961.0 140.4 L960.0 140.1 L959.0 140.5 L958.0 139.9 L957.0 139.9 L956.0 139.9 L955.0 140.4 L954.0 140.4 L953.0 140.2 L952.0 139.9 L951.0 140.5 L950.0 140.1 L949.0 140.0 L948.0 140.5 L947.0 140.1 L946.0 140.2 L945.0 139.9 L944.0 140.2 L943.0 140.4 L942.0 140.4 L941.0 140.1 L940.0 140.0 L939.0 140.5 L938.0 140.0 L937.0 140.5 L936.0 140.1 L935.0 140.1 L934.0 139.9 L933.0 140.0 L932.0 140.1 L931.0 140.2 L930.0 140.2 L929.0 140.3 L928.0 139.9 L927.0 140.4 L926.0 140.5 L925.0 140.0 L924.0 140.1 L923.0 140.5 L922.0 140.6 L921.0 140.4 L920.0 140.5 L919.0 140.5 L918.0 140.2 L917.0 140.0 L916.0 140.0 L915.0 140.0 L914.0 140.6 L913.0 140.1 L912.0 140.2 L911.0 140.0 L910.0 140.5 L909.0 140.4 L908.0 140.2 L907.0 140.1 L906.0 140.1 L905.0 140.3 L904.0 140.6 L903.0 140.1 L902.0 140.4 L901.0 140.1 L900.0 140.1 L899.0 140.5 L898.0 140.1 L897.0 140.6 L896.0 140.1 L895.0 140.3 L894.0 140.4 L893.0 140.5 L892.0 140.1 L891.0 140.4 L890.0 140.2 L889.0 140.2 L888.0 140.0 L887.0 140.1 L886.0 140.6 L885.0 140.4 L884.0 137.3 L883.0 137.4 L882.0 137.6 L881.0 138.0 L880.0 138.1 L879.0 138.7 L878.0 139.4 L877.0 140.0 L876.0 139.9 L875.0 139.9 L874.0 140.1 L873.0 140.3 L872.0 140.2 L871.0 140.4 L870.0 140.0 L869.0 139.9 L868.0 139.8 L867.0 140.1 L866.0 139.9 L865.0 140.0 L864.0 140.1 L863.0 140.1 L862.0 139.8 L861.0 139.8 L860.0 140.2 L859.0 140.2 L858.0 139.9 L857.0 139.8 L856.0 139.9 L855.0 140.2 L854.0 140.3 L853.0 139.9 L852.0 140.3 L851.0 139.8 L850.0 140.1 L849.0 140.0 L848.0 140.2 L847.0 140.2 L846.0 140.2 L845.0 140.4 L844.0 140.2 L843.0 140.1 L842.0 139.9 L841.0 139.8 L840.0 139.9 L839.0 140.4 L838.0 140.3 L837.0 140.3 L836.0 140.4 L835.0 140.0 L834.0 139.8 L833.0 140.1 L832.0 140.1 L831.0 140.3 L830.0 140.2 L829.0 139.8 L828.0 139.8 L827.0 140.3 L826.0 140.3 L825.0 140.4 L824.0 140.0 L823.0 140.0 L822.0 139.9 L821.0 139.9 L820.0 139.9 L819.0 140.3 L818.0 140.2 L817.0 140.1 L816.0 139.8 L815.0 140.4 L814.0 139.9 L813.0 139.8 L812.0 140.0 L811.0 140.0 L810.0 140.1 L809.0 140.0 L808.0 140.0 L807.0 140.2 L806.0 140.3 L805.0 140.1 L804.0 139.9 L803.0 139.9 L802.0 139.8 L801.0 140.0 L800.0 139.8 L799.0 139.9 L798.0 139.8 L797.0 140.0 L796.0 140.4 L795.0 140.3 L794.0 139.9 L793.0 140.1 L792.0 140.3 L791.0 139.9 L790.0 139.9 L789.0 139.9 L788.0 140.0 L787.0 140.1 L786.0 139.9 L785.0 140.2 L784.0 139.9 L783.0 140.4 L782.0 140.2 L781.0 139.9 L780.0 140.0 L779.0 140.1 L778.0 139.8 L777.0 140.4 L776.0 139.8 L775.0 139.9 L774.0 140.2 L773.0 140.2 L772.0 140.0 L771.0 140.2 L770.0 139.8 L769.0 140.2 L768.0 140.1 L767.0 140.4 L766.0 140.3 L765.0 140.2 L764.0 140.3 L763.0 140.3 L762.0 140.4 L761.0 140.0 L760.0 139.9 L759.0 140.1 L758.0 139.9 L757.0 139.9 L756.0 140.4 L755.0 139.9 L754.0 140.3 L753.0 139.8 L752.0 139.8 L751.0 139.9 L750.0 140.0 L749.0 140.0 L748.0 140.1 L747.0 140.4 L746.0 140.0 L745.0 140.0 L744.0 139.9 L743.0 140.3 L742.0 140.2 L741.0 140.4 L740.0 139.8 L739.0 140.3 L738.0 140.2 L737.0 139.8 L736.0 140.3 L735.0 140.0 L734.0 140.0 L733.0 139.8 L732.0 139.9 L731.0 139.2 L730.0 138.4 L729.0 138.1 L728.0 138.1 L727.0 138.4 L726.0 138.6 L725.0 138.2 L724.0 138.5 L723.0 138.6 L722.0 138.4 L721.0 138.5 L720.0 138.1 L719.0 138.6 L718.0 138.4 L717.0 138.1 L716.0 138.4 L715.0 138.2 L714.0 138.6 L713.0 138.1 L712.0 138.2 L711.0 138.3 L710.0 138.6 L709.0 138.5 L708.0 138.3 L707.0 138.0 L706.0 138.6 L705.0 138.6 L704.0 138.1 L703.0 138.5 L702.0 138.0 L701.0 138.2 L700.0 138.2 L699.0 138.2 L698.0 138.1 L697.0 138.2 L696.0 138.2 L695.0 138.2 L694.0 138.0 L693.0 137.8 L692.0 137.8 L691.0 138.1 L690.0 137.9 L689.0 138.1 L688.0 137.9 L687.0 137.9 L686.0 137.9 L685.0 138.2 L684.0 138.2 L683.0 138.3 L682.0 138.3 L681.0 138.2 L680.0 138.2 L679.0 138.2 L678.0 138.5 L677.0 138.4 L676.0 138.1 L675.0 138.5 L674.0 138.2 L673.0 138.1 L672.0 138.2 L671.0 138.6 L670.0 138.2 L669.0 138.6 L668.0 138.5 L667.0 138.6 L666.0 138.8 L665.0 138.9 L664.0 138.5 L663.0 138.9 L662.0 139.1 L661.0 139.2 L660.0 139.4 L659.0 139.6 L658.0 140.0 L657.0 139.7 L656.0 139.9 L655.0 139.7 L654.0 139.7 L653.0 139.8 L652.0 140.1 L651.0 140.1 L650.0 140.2 L649.0 140.0 L648.0 140.2 L647.0 140.2 L646.0 140.2 L645.0 140.0 L644.0 140.0 L643.0 139.7 L642.0 140.2 L641.0 140.1 L640.0 140.1 L639.0 140.2 L638.0 140.2 L637.0 139.7 L636.0 140.1 L635.0 140.1 L634.0 139.7 L633.0 140.3 L632.0 139.9Z" fill="#4de3a3"/></svg>
<div style="left:311px;top:115px;width:675px;height:30px;background:rgba(72,72,72,0.78);border:2px solid #686868;border-radius:5px;box-sizing:border-box;"></div>
<svg style="left:0px;top:0px;" width="1197" height="160" viewBox="0 0 1197 160"><path d="M632.0 119.0 L633.0 119.2 L634.0 119.5 L635.0 119.5 L636.0 119.3 L637.0 119.2 L638.0 119.1 L639.0 119.5 L640.0 119.4 L641.0 119.1 L642.0 119.3 L643.0 119.4 L644.0 119.4 L645.0 118.9 L646.0 119.3 L647.0 119.2 L648.0 119.3 L649.0 119.3 L650.0 119.0 L651.0 118.9 L652.0 119.3 L653.0 119.4 L654.0 119.1 L655.0 119.4 L656.0 119.5 L657.0 119.0 L658.0 119.5 L659.0 119.5 L660.0 120.0 L661.0 119.9 L662.0 120.2 L663.0 120.5 L664.0 120.7 L665.0 120.4 L666.0 120.5 L667.0 120.4 L668.0 121.0 L669.0 120.7 L670.0 120.8 L671.0 120.8 L672.0 121.0 L673.0 121.0 L674.0 120.8 L675.0 120.6 L676.0 121.1 L677.0 120.9 L678.0 120.8 L679.0 120.7 L680.0 121.2 L681.0 121.2 L682.0 120.8 L683.0 120.8 L684.0 121.1 L685.0 121.3 L686.0 120.9 L687.0 121.2 L688.0 120.9 L689.0 121.1 L690.0 121.0 L691.0 121.3 L692.0 121.0 L693.0 121.3 L694.0 121.2 L695.0 120.9 L696.0 120.9 L697.0 121.2 L698.0 121.2 L699.0 121.1 L700.0 121.0 L701.0 121.0 L702.0 121.2 L703.0 121.1 L704.0 120.8 L705.0 120.7 L706.0 121.2 L707.0 120.9 L708.0 120.7 L709.0 121.2 L710.0 120.7 L711.0 121.1 L712.0 120.8 L713.0 120.9 L714.0 120.8 L715.0 121.0 L716.0 120.9 L717.0 120.8 L718.0 120.9 L719.0 120.8 L720.0 120.9 L721.0 120.9 L722.0 121.1 L723.0 120.8 L724.0 120.8 L725.0 121.0 L726.0 120.7 L727.0 120.7 L728.0 120.9 L729.0 121.0 L730.0 120.8 L731.0 120.2 L732.0 119.4 L733.0 119.2 L734.0 119.4 L735.0 119.2 L736.0 119.1 L737.0 119.4 L738.0 119.0 L739.0 119.4 L740.0 119.0 L741.0 118.9 L742.0 119.1 L743.0 119.4 L744.0 119.1 L745.0 119.2 L746.0 118.8 L747.0 119.4 L748.0 118.9 L749.0 118.8 L750.0 119.0 L751.0 118.9 L752.0 119.3 L753.0 118.8 L754.0 119.1 L755.0 118.8 L756.0 118.9 L757.0 119.3 L758.0 118.9 L759.0 118.8 L760.0 119.4 L761.0 119.2 L762.0 119.0 L763.0 119.3 L764.0 118.9 L765.0 119.3 L766.0 118.9 L767.0 119.4 L768.0 119.1 L769.0 118.9 L770.0 119.3 L771.0 119.3 L772.0 119.1 L773.0 119.2 L774.0 119.4 L775.0 119.3 L776.0 119.3 L777.0 118.8 L778.0 119.0 L779.0 118.9 L780.0 119.3 L781.0 118.9 L782.0 119.4 L783.0 119.1 L784.0 119.0 L785.0 119.2 L786.0 118.9 L787.0 119.1 L788.0 119.1 L789.0 118.9 L790.0 119.4 L791.0 118.8 L792.0 119.0 L793.0 119.2 L794.0 118.9 L795.0 119.3 L796.0 118.8 L797.0 119.1 L798.0 119.2 L799.0 119.0 L800.0 119.2 L801.0 119.3 L802.0 119.0 L803.0 119.4 L804.0 118.9 L805.0 119.3 L806.0 119.0 L807.0 118.8 L808.0 119.1 L809.0 119.0 L810.0 119.2 L811.0 119.4 L812.0 119.4 L813.0 119.4 L814.0 119.0 L815.0 119.2 L816.0 119.1 L817.0 118.9 L818.0 119.4 L819.0 119.3 L820.0 119.0 L821.0 119.4 L822.0 119.4 L823.0 119.2 L824.0 119.4 L825.0 119.2 L826.0 119.3 L827.0 119.1 L828.0 119.1 L829.0 119.3 L830.0 119.0 L831.0 119.1 L832.0 119.4 L833.0 118.8 L834.0 119.3 L835.0 119.4 L836.0 119.4 L837.0 119.0 L838.0 118.9 L839.0 118.9 L840.0 119.2 L841.0 119.3 L842.0 119.4 L843.0 119.0 L844.0 119.1 L845.0 119.2 L846.0 119.0 L847.0 119.2 L848.0 118.8 L849.0 119.0 L850.0 119.3 L851.0 118.9 L852.0 119.4 L853.0 119.1 L854.0 119.2 L855.0 119.3 L856.0 119.4 L857.0 118.9 L858.0 119.4 L859.0 119.1 L860.0 118.8 L861.0 119.4 L862.0 119.3 L863.0 119.1 L864.0 119.1 L865.0 119.0 L866.0 118.9 L867.0 119.3 L868.0 119.2 L869.0 119.3 L870.0 119.4 L871.0 118.9 L872.0 118.9 L873.0 119.0 L874.0 119.4 L875.0 118.9 L876.0 119.0 L877.0 119.5 L878.0 119.8 L879.0 120.4 L880.0 121.0 L881.0 121.4 L882.0 121.7 L883.0 121.9 L884.0 121.9 L885.0 118.8 L886.0 118.8 L887.0 118.7 L888.0 118.8 L889.0 119.1 L890.0 118.9 L891.0 119.0 L892.0 118.7 L893.0 118.9 L894.0 119.1 L895.0 118.8 L896.0 118.6 L897.0 119.1 L898.0 118.7 L899.0 119.3 L900.0 119.1 L901.0 119.1 L902.0 118.8 L903.0 118.6 L904.0 118.8 L905.0 119.1 L906.0 118.7 L907.0 119.1 L908.0 119.1 L909.0 118.7 L910.0 118.9 L911.0 118.8 L912.0 118.8 L913.0 118.6 L914.0 119.0 L915.0 118.7 L916.0 118.8 L917.0 118.7 L918.0 119.0 L919.0 118.8 L920.0 118.9 L921.0 119.1 L922.0 119.1 L923.0 118.9 L924.0 119.2 L925.0 118.7 L926.0 119.2 L927.0 119.3 L928.0 119.2 L929.0 118.7 L930.0 119.1 L931.0 119.2 L932.0 119.3 L933.0 119.3 L934.0 118.8 L935.0 118.9 L936.0 118.8 L937.0 118.8 L938.0 119.2 L939.0 118.9 L940.0 119.1 L941.0 118.8 L942.0 118.8 L943.0 118.7 L944.0 119.3 L945.0 118.7 L946.0 118.7 L947.0 118.7 L948.0 119.2 L949.0 119.2 L950.0 119.2 L951.0 119.3 L952.0 118.7 L953.0 118.8 L954.0 118.9 L955.0 118.8 L956.0 118.9 L957.0 119.1 L958.0 119.2 L959.0 119.2 L960.0 118.8 L961.0 119.2 L962.0 119.1 L963.0 119.0 L964.0 119.3 L965.0 119.1 L966.0 119.1 L967.0 118.8 L968.0 119.1 L969.0 119.1 L970.0 118.7 L971.0 119.0 L972.0 118.8 L973.0 118.9 L974.0 119.3 L975.0 119.0 L976.0 119.0 L977.0 118.8 L978.0 119.1 L978.0 126.1 L977.0 126.4 L976.0 126.2 L975.0 126.2 L974.0 125.9 L973.0 126.3 L972.0 126.4 L971.0 126.2 L970.0 126.5 L969.0 126.1 L968.0 126.1 L967.0 126.4 L966.0 126.1 L965.0 126.1 L964.0 125.9 L963.0 126.2 L962.0 126.1 L961.0 126.0 L960.0 126.4 L959.0 126.0 L958.0 126.0 L957.0 126.1 L956.0 126.3 L955.0 126.4 L954.0 126.3 L953.0 126.4 L952.0 126.5 L951.0 125.9 L950.0 126.0 L949.0 126.0 L948.0 126.0 L947.0 126.5 L946.0 126.5 L945.0 126.5 L944.0 125.9 L943.0 126.5 L942.0 126.4 L941.0 126.4 L940.0 126.1 L939.0 126.3 L938.0 126.0 L937.0 126.4 L936.0 126.4 L935.0 126.3 L934.0 126.4 L933.0 125.9 L932.0 125.9 L931.0 126.0 L930.0 126.1 L929.0 126.5 L928.0 126.0 L927.0 125.9 L926.0 126.0 L925.0 126.5 L924.0 126.0 L923.0 126.3 L922.0 126.1 L921.0 126.1 L920.0 126.3 L919.0 126.4 L918.0 126.2 L917.0 126.5 L916.0 126.4 L915.0 126.5 L914.0 126.2 L913.0 126.6 L912.0 126.4 L911.0 126.4 L910.0 126.3 L909.0 126.5 L908.0 126.1 L907.0 126.1 L906.0 126.5 L905.0 126.1 L904.0 126.4 L903.0 126.6 L902.0 126.4 L901.0 126.1 L900.0 126.1 L899.0 125.9 L898.0 126.5 L897.0 126.1 L896.0 126.6 L895.0 126.4 L894.0 126.1 L893.0 126.3 L892.0 126.5 L891.0 126.2 L890.0 126.3 L889.0 126.1 L888.0 126.4 L887.0 126.5 L886.0 126.4 L885.0 126.4 L884.0 123.3 L883.0 123.3 L882.0 123.5 L881.0 123.8 L880.0 124.2 L879.0 124.8 L878.0 125.4 L877.0 125.7 L876.0 126.2 L875.0 126.3 L874.0 125.8 L873.0 126.2 L872.0 126.3 L871.0 126.3 L870.0 125.8 L869.0 125.9 L868.0 126.0 L867.0 125.9 L866.0 126.3 L865.0 126.2 L864.0 126.1 L863.0 126.1 L862.0 125.9 L861.0 125.8 L860.0 126.4 L859.0 126.1 L858.0 125.8 L857.0 126.3 L856.0 125.8 L855.0 125.9 L854.0 126.0 L853.0 126.1 L852.0 125.8 L851.0 126.3 L850.0 125.9 L849.0 126.2 L848.0 126.4 L847.0 126.0 L846.0 126.2 L845.0 126.0 L844.0 126.1 L843.0 126.2 L842.0 125.8 L841.0 125.9 L840.0 126.0 L839.0 126.3 L838.0 126.3 L837.0 126.2 L836.0 125.8 L835.0 125.8 L834.0 125.9 L833.0 126.4 L832.0 125.8 L831.0 126.1 L830.0 126.2 L829.0 125.9 L828.0 126.1 L827.0 126.1 L826.0 125.9 L825.0 126.0 L824.0 125.8 L823.0 126.0 L822.0 125.8 L821.0 125.8 L820.0 126.2 L819.0 125.9 L818.0 125.8 L817.0 126.3 L816.0 126.1 L815.0 126.0 L814.0 126.2 L813.0 125.8 L812.0 125.8 L811.0 125.8 L810.0 126.0 L809.0 126.2 L808.0 126.1 L807.0 126.4 L806.0 126.2 L805.0 125.9 L804.0 126.3 L803.0 125.8 L802.0 126.2 L801.0 125.9 L800.0 126.0 L799.0 126.2 L798.0 126.0 L797.0 126.1 L796.0 126.4 L795.0 125.9 L794.0 126.3 L793.0 126.0 L792.0 126.2 L791.0 126.4 L790.0 125.8 L789.0 126.3 L788.0 126.1 L787.0 126.1 L786.0 126.3 L785.0 126.0 L784.0 126.2 L783.0 126.1 L782.0 125.8 L781.0 126.3 L780.0 125.9 L779.0 126.3 L778.0 126.2 L777.0 126.4 L776.0 125.9 L775.0 125.9 L774.0 125.8 L773.0 126.0 L772.0 126.1 L771.0 125.9 L770.0 125.9 L769.0 126.3 L768.0 126.1 L767.0 125.8 L766.0 126.3 L765.0 125.9 L764.0 126.3 L763.0 125.9 L762.0 126.2 L761.0 126.0 L760.0 125.8 L759.0 126.4 L758.0 126.3 L757.0 125.9 L756.0 126.3 L755.0 126.4 L754.0 126.1 L753.0 126.4 L752.0 125.9 L751.0 126.3 L750.0 126.2 L749.0 126.4 L748.0 126.3 L747.0 125.8 L746.0 126.4 L745.0 126.0 L744.0 126.1 L743.0 125.8 L742.0 126.1 L741.0 126.3 L740.0 126.2 L739.0 125.8 L738.0 126.2 L737.0 125.8 L736.0 126.1 L735.0 126.0 L734.0 125.8 L733.0 126.0 L732.0 125.8 L731.0 125.0 L730.0 124.4 L729.0 124.2 L728.0 124.3 L727.0 124.5 L726.0 124.5 L725.0 124.2 L724.0 124.4 L723.0 124.4 L722.0 124.1 L721.0 124.3 L720.0 124.3 L719.0 124.4 L718.0 124.3 L717.0 124.4 L716.0 124.3 L715.0 124.2 L714.0 124.4 L713.0 124.3 L712.0 124.4 L711.0 124.1 L710.0 124.5 L709.0 124.0 L708.0 124.5 L707.0 124.3 L706.0 124.0 L705.0 124.5 L704.0 124.4 L703.0 124.1 L702.0 124.0 L701.0 124.2 L700.0 124.2 L699.0 124.1 L698.0 124.0 L697.0 124.0 L696.0 124.3 L695.0 124.3 L694.0 124.0 L693.0 123.9 L692.0 124.2 L691.0 123.9 L690.0 124.2 L689.0 124.1 L688.0 124.3 L687.0 124.0 L686.0 124.3 L685.0 123.9 L684.0 124.1 L683.0 124.4 L682.0 124.4 L681.0 124.0 L680.0 124.0 L679.0 124.5 L678.0 124.4 L677.0 124.3 L676.0 124.1 L675.0 124.6 L674.0 124.4 L673.0 124.2 L672.0 124.2 L671.0 124.4 L670.0 124.4 L669.0 124.5 L668.0 124.2 L667.0 124.8 L666.0 124.7 L665.0 124.8 L664.0 124.5 L663.0 124.7 L662.0 125.0 L661.0 125.3 L660.0 125.2 L659.0 125.7 L658.0 125.7 L657.0 126.2 L656.0 125.7 L655.0 125.8 L654.0 126.1 L653.0 125.8 L652.0 125.9 L651.0 126.3 L650.0 126.2 L649.0 125.9 L648.0 125.9 L647.0 126.0 L646.0 125.9 L645.0 126.3 L644.0 125.8 L643.0 125.8 L642.0 125.9 L641.0 126.1 L640.0 125.8 L639.0 125.7 L638.0 126.1 L637.0 126.0 L636.0 125.9 L635.0 125.7 L634.0 125.7 L633.0 126.0 L632.0 126.2Z" fill="#72efba"/><path d="M632.0 133.1 L633.0 133.2 L634.0 133.4 L635.0 133.0 L636.0 133.5 L637.0 133.0 L638.0 133.4 L639.0 133.5 L640.0 133.4 L641.0 133.1 L642.0 132.9 L643.0 133.5 L644.0 133.2 L645.0 133.2 L646.0 133.0 L647.0 133.4 L648.0 133.2 L649.0 133.3 L650.0 133.0 L651.0 133.4 L652.0 132.9 L653.0 133.4 L654.0 133.4 L655.0 133.1 L656.0 133.2 L657.0 133.5 L658.0 133.4 L659.0 133.9 L660.0 133.7 L661.0 134.0 L662.0 134.0 L663.0 134.2 L664.0 134.5 L665.0 134.5 L666.0 134.6 L667.0 134.4 L668.0 135.0 L669.0 134.5 L670.0 135.1 L671.0 135.0 L672.0 135.0 L673.0 134.6 L674.0 134.9 L675.0 134.9 L676.0 134.7 L677.0 135.1 L678.0 135.0 L679.0 134.9 L680.0 134.8 L681.0 134.9 L682.0 134.9 L683.0 135.1 L684.0 135.2 L685.0 135.3 L686.0 134.9 L687.0 135.0 L688.0 135.0 L689.0 135.3 L690.0 135.2 L691.0 135.0 L692.0 135.1 L693.0 135.3 L694.0 135.1 L695.0 134.9 L696.0 135.2 L697.0 135.2 L698.0 135.1 L699.0 134.9 L700.0 134.8 L701.0 135.2 L702.0 135.1 L703.0 135.1 L704.0 135.0 L705.0 134.9 L706.0 135.1 L707.0 135.0 L708.0 135.1 L709.0 134.6 L710.0 134.8 L711.0 135.1 L712.0 134.6 L713.0 135.1 L714.0 134.9 L715.0 134.6 L716.0 134.7 L717.0 134.7 L718.0 134.9 L719.0 135.0 L720.0 134.8 L721.0 135.1 L722.0 135.0 L723.0 134.9 L724.0 135.1 L725.0 134.9 L726.0 134.7 L727.0 134.7 L728.0 134.8 L729.0 134.7 L730.0 134.8 L731.0 134.2 L732.0 133.1 L733.0 133.2 L734.0 133.0 L735.0 132.9 L736.0 133.2 L737.0 133.1 L738.0 133.0 L739.0 133.2 L740.0 133.3 L741.0 133.0 L742.0 132.9 L743.0 132.9 L744.0 133.0 L745.0 132.9 L746.0 133.0 L747.0 133.0 L748.0 133.2 L749.0 133.2 L750.0 133.0 L751.0 133.4 L752.0 133.2 L753.0 132.9 L754.0 133.0 L755.0 133.0 L756.0 133.3 L757.0 133.2 L758.0 133.2 L759.0 133.0 L760.0 133.2 L761.0 133.0 L762.0 132.8 L763.0 133.3 L764.0 133.0 L765.0 132.9 L766.0 133.2 L767.0 133.1 L768.0 132.8 L769.0 133.4 L770.0 133.1 L771.0 133.3 L772.0 132.9 L773.0 132.8 L774.0 133.1 L775.0 133.4 L776.0 133.1 L777.0 133.1 L778.0 133.0 L779.0 133.1 L780.0 133.0 L781.0 132.9 L782.0 133.1 L783.0 133.2 L784.0 132.8 L785.0 133.3 L786.0 133.0 L787.0 133.2 L788.0 133.0 L789.0 133.4 L790.0 132.8 L791.0 133.2 L792.0 133.4 L793.0 133.3 L794.0 133.2 L795.0 133.4 L796.0 133.2 L797.0 133.2 L798.0 133.0 L799.0 133.2 L800.0 133.3 L801.0 133.3 L802.0 133.0 L803.0 132.8 L804.0 133.1 L805.0 133.3 L806.0 132.9 L807.0 133.2 L808.0 133.3 L809.0 133.4 L810.0 132.9 L811.0 132.9 L812.0 133.0 L813.0 133.1 L814.0 133.1 L815.0 133.3 L816.0 132.8 L817.0 133.2 L818.0 133.0 L819.0 132.9 L820.0 132.9 L821.0 133.1 L822.0 133.3 L823.0 133.1 L824.0 133.4 L825.0 132.9 L826.0 133.2 L827.0 132.9 L828.0 133.3 L829.0 133.2 L830.0 133.3 L831.0 133.2 L832.0 133.3 L833.0 133.4 L834.0 133.0 L835.0 133.3 L836.0 133.3 L837.0 133.3 L838.0 133.1 L839.0 133.2 L840.0 133.0 L841.0 133.0 L842.0 133.2 L843.0 132.8 L844.0 132.9 L845.0 133.4 L846.0 132.9 L847.0 132.9 L848.0 132.9 L849.0 133.4 L850.0 132.9 L851.0 133.0 L852.0 133.4 L853.0 133.4 L854.0 132.8 L855.0 133.0 L856.0 133.3 L857.0 133.4 L858.0 133.4 L859.0 133.3 L860.0 132.9 L861.0 133.2 L862.0 133.4 L863.0 132.9 L864.0 132.9 L865.0 133.3 L866.0 132.9 L867.0 133.1 L868.0 132.9 L869.0 133.0 L870.0 132.9 L871.0 132.9 L872.0 132.9 L873.0 133.3 L874.0 133.0 L875.0 133.1 L876.0 133.0 L877.0 133.6 L878.0 133.7 L879.0 134.3 L880.0 135.0 L881.0 135.4 L882.0 135.8 L883.0 135.7 L884.0 135.9 L885.0 132.9 L886.0 133.2 L887.0 132.9 L888.0 132.9 L889.0 132.9 L890.0 132.7 L891.0 133.3 L892.0 132.7 L893.0 133.0 L894.0 132.9 L895.0 132.8 L896.0 132.7 L897.0 133.0 L898.0 133.0 L899.0 132.6 L900.0 133.2 L901.0 132.8 L902.0 132.8 L903.0 133.2 L904.0 132.9 L905.0 132.8 L906.0 132.7 L907.0 133.1 L908.0 132.6 L909.0 132.9 L910.0 133.0 L911.0 132.7 L912.0 133.2 L913.0 132.8 L914.0 132.9 L915.0 133.1 L916.0 132.7 L917.0 133.0 L918.0 133.0 L919.0 132.9 L920.0 132.8 L921.0 133.1 L922.0 133.0 L923.0 133.0 L924.0 132.9 L925.0 132.7 L926.0 133.1 L927.0 132.7 L928.0 133.0 L929.0 133.0 L930.0 133.1 L931.0 133.0 L932.0 132.7 L933.0 132.9 L934.0 132.8 L935.0 133.1 L936.0 133.1 L937.0 133.1 L938.0 132.9 L939.0 132.9 L940.0 132.8 L941.0 133.3 L942.0 132.8 L943.0 132.7 L944.0 132.9 L945.0 133.3 L946.0 133.1 L947.0 133.3 L948.0 133.2 L949.0 132.7 L950.0 132.9 L951.0 132.9 L952.0 132.8 L953.0 132.7 L954.0 132.9 L955.0 132.9 L956.0 132.9 L957.0 132.9 L958.0 132.9 L959.0 132.9 L960.0 133.2 L961.0 132.9 L962.0 133.0 L963.0 132.8 L964.0 133.2 L965.0 133.2 L966.0 133.3 L967.0 132.8 L968.0 132.7 L969.0 132.9 L970.0 133.1 L971.0 132.8 L972.0 132.8 L973.0 133.0 L974.0 133.2 L975.0 133.1 L976.0 133.0 L977.0 133.1 L978.0 133.0 L978.0 140.2 L977.0 140.1 L976.0 140.2 L975.0 140.1 L974.0 140.0 L973.0 140.2 L972.0 140.4 L971.0 140.4 L970.0 140.1 L969.0 140.3 L968.0 140.5 L967.0 140.4 L966.0 139.9 L965.0 140.0 L964.0 140.0 L963.0 140.4 L962.0 140.2 L961.0 140.3 L960.0 140.0 L959.0 140.3 L958.0 140.3 L957.0 140.3 L956.0 140.3 L955.0 140.3 L954.0 140.3 L953.0 140.5 L952.0 140.4 L951.0 140.3 L950.0 140.3 L949.0 140.5 L948.0 140.0 L947.0 139.9 L946.0 140.1 L945.0 139.9 L944.0 140.3 L943.0 140.5 L942.0 140.4 L941.0 139.9 L940.0 140.4 L939.0 140.3 L938.0 140.3 L937.0 140.1 L936.0 140.1 L935.0 140.1 L934.0 140.4 L933.0 140.3 L932.0 140.5 L931.0 140.2 L930.0 140.1 L929.0 140.2 L928.0 140.2 L927.0 140.5 L926.0 140.1 L925.0 140.5 L924.0 140.3 L923.0 140.2 L922.0 140.2 L921.0 140.1 L920.0 140.4 L919.0 140.3 L918.0 140.2 L917.0 140.2 L916.0 140.5 L915.0 140.1 L914.0 140.3 L913.0 140.4 L912.0 140.0 L911.0 140.5 L910.0 140.2 L909.0 140.3 L908.0 140.6 L907.0 140.1 L906.0 140.5 L905.0 140.4 L904.0 140.3 L903.0 140.0 L902.0 140.4 L901.0 140.4 L900.0 140.0 L899.0 140.6 L898.0 140.2 L897.0 140.2 L896.0 140.5 L895.0 140.4 L894.0 140.3 L893.0 140.2 L892.0 140.5 L891.0 139.9 L890.0 140.5 L889.0 140.3 L888.0 140.3 L887.0 140.3 L886.0 140.0 L885.0 140.3 L884.0 137.3 L883.0 137.5 L882.0 137.4 L881.0 137.8 L880.0 138.2 L879.0 138.9 L878.0 139.5 L877.0 139.6 L876.0 140.2 L875.0 140.1 L874.0 140.2 L873.0 139.9 L872.0 140.3 L871.0 140.3 L870.0 140.3 L869.0 140.2 L868.0 140.3 L867.0 140.1 L866.0 140.3 L865.0 139.9 L864.0 140.3 L863.0 140.3 L862.0 139.8 L861.0 140.0 L860.0 140.3 L859.0 139.9 L858.0 139.8 L857.0 139.8 L856.0 139.9 L855.0 140.2 L854.0 140.4 L853.0 139.8 L852.0 139.8 L851.0 140.2 L850.0 140.3 L849.0 139.8 L848.0 140.3 L847.0 140.3 L846.0 140.3 L845.0 139.8 L844.0 140.3 L843.0 140.4 L842.0 140.0 L841.0 140.2 L840.0 140.2 L839.0 140.0 L838.0 140.1 L837.0 139.9 L836.0 139.9 L835.0 139.9 L834.0 140.2 L833.0 139.8 L832.0 139.9 L831.0 140.0 L830.0 139.9 L829.0 140.0 L828.0 139.9 L827.0 140.3 L826.0 140.0 L825.0 140.3 L824.0 139.8 L823.0 140.1 L822.0 139.9 L821.0 140.1 L820.0 140.3 L819.0 140.3 L818.0 140.2 L817.0 140.0 L816.0 140.4 L815.0 139.9 L814.0 140.1 L813.0 140.1 L812.0 140.2 L811.0 140.3 L810.0 140.3 L809.0 139.8 L808.0 139.9 L807.0 140.0 L806.0 140.3 L805.0 139.9 L804.0 140.1 L803.0 140.4 L802.0 140.2 L801.0 139.9 L800.0 139.9 L799.0 140.0 L798.0 140.2 L797.0 140.0 L796.0 140.0 L795.0 139.8 L794.0 140.0 L793.0 139.9 L792.0 139.8 L791.0 140.0 L790.0 140.4 L789.0 139.8 L788.0 140.2 L787.0 140.0 L786.0 140.2 L785.0 139.9 L784.0 140.4 L783.0 140.0 L782.0 140.1 L781.0 140.3 L780.0 140.2 L779.0 140.1 L778.0 140.2 L777.0 140.1 L776.0 140.1 L775.0 139.8 L774.0 140.1 L773.0 140.4 L772.0 140.3 L771.0 139.9 L770.0 140.1 L769.0 139.8 L768.0 140.4 L767.0 140.1 L766.0 140.0 L765.0 140.3 L764.0 140.2 L763.0 139.9 L762.0 140.4 L761.0 140.2 L760.0 140.0 L759.0 140.2 L758.0 140.0 L757.0 140.0 L756.0 139.9 L755.0 140.2 L754.0 140.2 L753.0 140.3 L752.0 140.0 L751.0 139.8 L750.0 140.2 L749.0 140.0 L748.0 140.0 L747.0 140.2 L746.0 140.2 L745.0 140.3 L744.0 140.2 L743.0 140.3 L742.0 140.3 L741.0 140.2 L740.0 139.9 L739.0 140.0 L738.0 140.2 L737.0 140.1 L736.0 140.0 L735.0 140.3 L734.0 140.2 L733.0 140.0 L732.0 140.1 L731.0 139.0 L730.0 138.4 L729.0 138.5 L728.0 138.4 L727.0 138.5 L726.0 138.5 L725.0 138.3 L724.0 138.1 L723.0 138.3 L722.0 138.2 L721.0 138.1 L720.0 138.4 L719.0 138.2 L718.0 138.3 L717.0 138.5 L716.0 138.5 L715.0 138.6 L714.0 138.3 L713.0 138.1 L712.0 138.6 L711.0 138.1 L710.0 138.4 L709.0 138.6 L708.0 138.1 L707.0 138.2 L706.0 138.1 L705.0 138.3 L704.0 138.2 L703.0 138.1 L702.0 138.1 L701.0 138.0 L700.0 138.4 L699.0 138.3 L698.0 138.1 L697.0 138.0 L696.0 138.0 L695.0 138.3 L694.0 138.1 L693.0 137.9 L692.0 138.1 L691.0 138.2 L690.0 138.0 L689.0 137.9 L688.0 138.2 L687.0 138.2 L686.0 138.3 L685.0 137.9 L684.0 138.0 L683.0 138.1 L682.0 138.3 L681.0 138.3 L680.0 138.4 L679.0 138.3 L678.0 138.2 L677.0 138.1 L676.0 138.5 L675.0 138.3 L674.0 138.3 L673.0 138.6 L672.0 138.2 L671.0 138.2 L670.0 138.1 L669.0 138.7 L668.0 138.2 L667.0 138.8 L666.0 138.6 L665.0 138.7 L664.0 138.7 L663.0 139.0 L662.0 139.2 L661.0 139.2 L660.0 139.5 L659.0 139.3 L658.0 139.8 L657.0 139.7 L656.0 140.0 L655.0 140.1 L654.0 139.8 L653.0 139.8 L652.0 140.3 L651.0 139.8 L650.0 140.2 L649.0 139.9 L648.0 140.0 L647.0 139.8 L646.0 140.2 L645.0 140.0 L644.0 140.0 L643.0 139.7 L642.0 140.3 L641.0 140.1 L640.0 139.8 L639.0 139.7 L638.0 139.8 L637.0 140.2 L636.0 139.7 L635.0 140.2 L634.0 139.8 L633.0 140.0 L632.0 140.1Z" fill="#72efba"/></svg>
<div style="left:979px;top:117px;width:7px;height:26px;background:#4a4a4a;border:1px solid #707070;border-radius:3px;box-sizing:border-box;"></div>
<div style="left:982px;top:120px;width:1px;height:20px;background:#8a8a8a;"></div>
<svg style="left:1086px;top:120px;" width="20" height="20" viewBox="0 0 20 20"><circle cx="9" cy="9" r="4.3" fill="none" stroke="#b0b0b0" stroke-width="1.5"/><path d="M6.8 9h4.4" stroke="#b0b0b0" stroke-width="1.3"/><path d="M12.2 12.2l4.3 4.3" stroke="#b0b0b0" stroke-width="2"/><path d="M9 0.5l2.2 2.4H6.8zM9 17.8l2.2-2.4H6.8zM0.5 9l2.4-2.2v4.4zM17.5 9l-2.4-2.2v4.4z" fill="#b0b0b0"/></svg>
<svg style="left:1116px;top:122px;" width="16" height="14" viewBox="0 0 16 14"><path d="M1 1h13.5v12H1zM1 5h13.5M1 9h13.5" fill="none" stroke="#b8b8b8" stroke-width="1.4"/></svg>
<div style="left:311px;top:161px;width:764px;height:25px;background:#000;"></div>
<div style="left:311px;top:162px;width:763px;height:24px;background:#232323;"></div>
<svg style="left:0px;top:0px;" width="1197" height="190" viewBox="0 0 1197 190"><path d="M650.5 179.3V186M692.5 182.2V186M734.5 179.3V186M776.5 182.2V186M819.5 179.3V186M861.5 182.2V186M903.5 179.3V186M945.5 182.2V186M987.5 179.3V186M1030.5 182.2V186M1072.5 179.3V186" stroke="#b9b9b9" stroke-width="1" fill="none"/></svg>
<span class="t" style="left:640.50px;top:166.00px;font-size:10.5px;color:#a0a0a0;font-weight:700;letter-spacing:0.228px;">1:20</span>
<span class="t" style="left:724.50px;top:166.00px;font-size:10.5px;color:#a0a0a0;font-weight:700;letter-spacing:0.228px;">1:40</span>
<span class="t" style="left:809.50px;top:166.00px;font-size:10.5px;color:#a0a0a0;font-weight:700;letter-spacing:0.228px;">2:00</span>
<span class="t" style="left:893.50px;top:166.00px;font-size:10.5px;color:#a0a0a0;font-weight:700;letter-spacing:0.228px;">2:20</span>
<span class="t" style="left:977.50px;top:166.00px;font-size:10.5px;color:#a0a0a0;font-weight:700;letter-spacing:0.228px;">2:40</span>
<div class="clip" style="left:1050px;top:160px;width:24px;height:26px;">
<span class="t" style="left:12.50px;top:6.00px;font-size:10.5px;color:#a0a0a0;font-weight:700;letter-spacing:0.228px;">3:00</span>
</div>
<div style="left:311px;top:186px;width:764px;height:352px;background:#000;"></div>
<svg style="left:0px;top:0px;" width="1197" height="540" viewBox="0 0 1197 540"><path d="M650.5 186V537M734.5 186V537M819.5 186V537M903.5 186V537M987.5 186V537M1072.5 186V537M311 187.5H1075M311 212.5H1075M311 243.5H1075M311 259.5H1075M311 290.5H1075M311 306.5H1075M311 336.5H1075M311 388.5H1075M311 512.5H1075" stroke="#0c3a0c" stroke-width="1" fill="none"/></svg>
<svg style="left:0px;top:0px;" width="1197" height="540" viewBox="0 0 1197 540"><path d="M632.5 229V319M633.5 229V319M634.5 229V319M635.5 230V319M636.5 229V319M637.5 230V319M638.5 230V319M639.5 229V318M640.5 229V319M641.5 229V319M642.5 230V315M643.5 230V318M644.5 230V318M645.5 229V319M646.5 229V319M647.5 229V319M648.5 229V319M649.5 230V319M650.5 229V319M651.5 229V319M652.5 230V319M653.5 230V319M654.5 229V319M655.5 229V319M656.5 229V316M657.5 229V319M658.5 229V319M659.5 230V319M660.5 229V318M661.5 230V319M662.5 229V319M663.5 230V318M664.5 230V318M665.5 229V318M666.5 229V319M667.5 230V319M668.5 230V319M669.5 230V319M670.5 230V318M671.5 229V319M672.5 229V319M673.5 230V319M674.5 229V319M675.5 230V319M676.5 230V318M677.5 229V319M678.5 229V318M679.5 230V319M680.5 230V319M681.5 229V319M682.5 229V319M683.5 229V319M684.5 230V318M685.5 229V319M686.5 230V318M687.5 229V319M688.5 230V319M689.5 229V319M690.5 229V318M691.5 230V319M692.5 230V319M693.5 230V319M694.5 229V319M695.5 230V319M696.5 230V318M697.5 229V319M698.5 229V319M699.5 229V318M700.5 232V319M701.5 230V318M702.5 229V319M703.5 230V319M704.5 229V319M705.5 229V319M706.5 229V318M707.5 230V313M708.5 233V316M709.5 241V314M710.5 234V312M711.5 234V305M712.5 235V311M713.5 235V310M714.5 235V309M715.5 237V309M716.5 236V308M717.5 238V308M718.5 237V308M719.5 238V306M720.5 238V307M721.5 247V306M722.5 240V305M723.5 242V305M724.5 242V303M725.5 242V294M726.5 251V302M727.5 253V303M728.5 245V305M729.5 248V305M730.5 245V302M731.5 245V306M732.5 246V305M733.5 246V304M734.5 251V302M735.5 245V301M736.5 247V300M737.5 248V293M738.5 248V300M739.5 249V301M740.5 254V300M741.5 255V300M742.5 251V300M743.5 252V300M744.5 252V298M745.5 255V299M746.5 261V298M747.5 254V297M748.5 257V296M749.5 262V294M750.5 260V298M751.5 251V300M752.5 251V301M753.5 250V293M754.5 253V298M755.5 250V294M756.5 252V298M757.5 252V298M758.5 252V298M759.5 252V299M760.5 262V299M761.5 257V300M762.5 250V299M763.5 249V300M764.5 248V301M765.5 248V301M766.5 256V300M767.5 247V299M768.5 257V298M769.5 246V296M770.5 246V296M771.5 247V298M772.5 249V291M773.5 249V298M774.5 251V289M775.5 261V293M776.5 252V294M777.5 253V298M778.5 252V298M779.5 253V296M780.5 253V292M781.5 254V289M782.5 252V297M783.5 252V298M784.5 252V298M785.5 250V299M786.5 259V298M787.5 250V298M788.5 255V297M789.5 247V287M790.5 247V296M791.5 233V315M792.5 233V315M793.5 241V314M794.5 233V315M795.5 234V315M796.5 240V315M797.5 233V315M798.5 234V314M799.5 233V315M800.5 243V310M801.5 234V315M802.5 234V314M803.5 233V305M804.5 241V314M805.5 234V315M806.5 233V314M807.5 234V315M808.5 238V315M809.5 233V315M810.5 233V315M811.5 233V314M812.5 233V315M813.5 233V314M814.5 234V315M815.5 234V315M816.5 233V310M817.5 233V314M818.5 244V315M819.5 233V309M820.5 233V310M821.5 233V315M822.5 233V308M823.5 233V315M824.5 233V314M825.5 237V307M826.5 233V315M827.5 238V314M828.5 233V315M829.5 233V312M830.5 233V315M831.5 233V314M832.5 233V315M833.5 233V315M834.5 243V315M835.5 234V315M836.5 233V314M837.5 234V308M838.5 244V315M839.5 233V315M840.5 233V314M841.5 233V315M842.5 233V315M843.5 234V315M844.5 233V315M845.5 233V314M846.5 233V315M847.5 233V315M848.5 233V314M849.5 233V309M850.5 233V309M851.5 233V315M852.5 234V315M853.5 233V314M854.5 233V315M855.5 233V314M856.5 233V315M857.5 233V315M858.5 233V307M859.5 233V314M860.5 234V311M861.5 234V310M862.5 233V315M863.5 233V315M864.5 233V315M865.5 233V315M866.5 242V315M867.5 245V308M868.5 241V315M869.5 245V315M870.5 233V315M871.5 234V314M872.5 233V315M873.5 234V315M874.5 234V310M875.5 238V316M876.5 234V316M877.5 233V304M878.5 233V304M879.5 233V316M880.5 233V315M881.5 233V316M882.5 233V316M883.5 233V316M884.5 233V315M885.5 233V316M886.5 234V308M887.5 234V316M888.5 233V316M889.5 234V316M890.5 233V316M891.5 233V316M892.5 233V316M893.5 234V315M894.5 233V316M895.5 233V316M896.5 234V316M897.5 233V316M898.5 233V316M899.5 234V315M900.5 233V316M901.5 233V312M902.5 234V316M903.5 233V315M904.5 233V315M905.5 234V316M906.5 233V316M907.5 233V316M908.5 234V316M909.5 233V316M910.5 234V315M911.5 233V316M912.5 233V315M913.5 233V315M914.5 233V316M915.5 233V316M916.5 233V316M917.5 233V316M918.5 233V316M919.5 234V316M920.5 234V315M921.5 233V316M922.5 233V315M923.5 233V315M924.5 234V316M925.5 234V315M926.5 233V316M927.5 234V315M928.5 233V316M929.5 233V315M930.5 233V316M931.5 233V316M932.5 233V316M933.5 233V315M934.5 233V316M935.5 233V316M936.5 234V316M937.5 233V316M938.5 233V316M939.5 234V316M940.5 233V316M941.5 233V316M942.5 234V316M943.5 233V315M944.5 241V316M945.5 233V316M946.5 233V316M947.5 234V316M948.5 233V315M949.5 234V316M950.5 233V315M951.5 233V315M952.5 233V316M953.5 234V315M954.5 233V316M955.5 233V316M956.5 233V316M957.5 246V300M958.5 247V299M959.5 250V298M960.5 251V296M961.5 254V293M962.5 256V290M963.5 260V286M964.5 266V282M965.5 267V282M966.5 267V282M967.5 231V319M968.5 230V319M969.5 231V318M970.5 230V318M971.5 230V316M972.5 231V319M973.5 230V318M974.5 234V319M975.5 230V317M976.5 231V318M977.5 231V319M978.5 230V318M979.5 231V318M980.5 231V319M981.5 231V319M982.5 230V319M983.5 231V319M984.5 230V319M985.5 230V319M986.5 230V318M987.5 236V319M988.5 230V319M989.5 230V318M990.5 230V319M991.5 231V315M992.5 230V319M993.5 230V319M994.5 231V318M995.5 230V318M996.5 230V319M997.5 230V319M998.5 231V319M999.5 231V319M1000.5 236V319M1001.5 230V318M1002.5 231V319M1003.5 231V319M1004.5 230V319M1005.5 230V319M1006.5 231V319M1007.5 230V319M1008.5 231V319M1009.5 231V319M1010.5 230V318M1011.5 230V318M1012.5 231V318M1013.5 231V319M1014.5 230V319M1015.5 230V318M1016.5 230V319M1017.5 230V319M1018.5 230V315M1019.5 230V318M1020.5 230V319M1021.5 236V319M1022.5 231V319M1023.5 231V319M1024.5 230V318M1025.5 230V319M1026.5 230V318M1027.5 231V319M1028.5 230V319M1029.5 230V319M1030.5 230V319M1031.5 231V318M1032.5 231V319M1033.5 230V318M1034.5 230V319M1035.5 230V318M1036.5 231V318M1037.5 231V319M1038.5 231V319M1039.5 230V319M1040.5 230V319M1041.5 230V319M1042.5 230V319M1043.5 234V319M1044.5 230V319M1045.5 230V319M1046.5 233V319M1047.5 230V318M1048.5 230V319M1049.5 230V319M1050.5 230V318M1051.5 230V319M1052.5 230V319M1053.5 230V318M1054.5 230V319M1055.5 230V319M1056.5 230V318M1057.5 230V319M1058.5 231V318M1059.5 231V319M1060.5 230V319M1061.5 230V319M1062.5 230V318M1063.5 230V318M1064.5 230V319M1065.5 230V319M1066.5 231V319M1067.5 230V319M1068.5 230V318M1069.5 230V318M1070.5 230V318M1071.5 230V319M1072.5 231V319M1073.5 231V316M1030.5 405V496M1031.5 405V495M1032.5 405V496M1033.5 405V496M1034.5 405V493M1035.5 405V495M1036.5 405V496M1037.5 406V496M1038.5 406V496M1039.5 406V496M1040.5 411V495M1041.5 405V496M1042.5 405V496M1043.5 405V496M1044.5 405V496M1045.5 405V496M1046.5 405V496M1047.5 405V496M1048.5 405V496M1049.5 405V496M1050.5 405V496M1051.5 406V489M1052.5 405V496M1053.5 405V496M1054.5 406V496M1055.5 408V496M1056.5 405V496M1057.5 411V496M1058.5 406V495M1059.5 405V495M1060.5 413V496M1061.5 405V496M1062.5 405V496M1063.5 406V496M1064.5 405V496M1065.5 412V495M1066.5 405V496M1067.5 409V495M1068.5 406V488M1069.5 405V496M1070.5 405V496M1071.5 407V496M1072.5 406V496M1073.5 405V496" stroke="#46dc99" stroke-width="1" fill="none" shape-rendering="crispEdges"/><path d="M632 274.500H1075M1030 450.500H1075" stroke="#63e6ab" stroke-width="1" opacity="0.500"/></svg>
<div style="left:311px;top:362px;width:765px;height:1px;background:#6a9070;"></div>
<div style="left:311px;top:363px;width:765px;height:1px;background:#1a2a1c;"></div>
<div style="left:632px;top:210px;width:124px;height:26px;background:rgba(38,38,38,0.72);"></div>
<div style="left:632px;top:210px;width:8px;height:26px;background:rgba(90,90,90,0.75);"></div>
<svg style="left:634px;top:218px;" width="5" height="11" viewBox="0 0 5 11"><path d="M1 1.500h1M3 1.500h1M1 3.500h1M3 3.500h1M1 5.500h1M3 5.500h1M1 7.500h1M3 7.500h1M1 9.500h1M3 9.500h1" stroke="#c0c0c0" stroke-width="1"/></svg>
<svg style="left:641px;top:213px;" width="17" height="16" viewBox="0 0 17 16"><path d="M1.5 15v-2M3.5 15v-3M5.5 15v-4M7.5 15v-5M9.5 15v-7M11.5 15v-9M13.5 15v-11M15.5 15V1" stroke="#c0c0c0" stroke-width="1"/></svg>
<svg style="left:661px;top:212px;" width="21" height="21" viewBox="0 0 21 21"><circle cx="10.4" cy="10.2" r="8.2" fill="none" stroke="#8d8d8d" stroke-width="1.8"/><path d="M10.400 10.500V2" stroke="#9a9a9a" stroke-width="1.800"/></svg>
<span class="t" style="left:684.50px;top:217.00px;font-size:12px;color:#2d8ceb;font-weight:700;letter-spacing:0.312px;">+0</span>
<span class="t" style="left:701.00px;top:218.00px;font-size:11px;color:#8f8f8f;font-weight:700;">dB</span>
<div style="left:737px;top:213px;width:1px;height:20px;background:#555;"></div>
<svg style="left:742px;top:218px;" width="10" height="10" viewBox="0 0 10 10"><path d="M5.2 0.6l4 4-1 .6-1.6-.3L4.9 6.8 4.6 8.6 3.2 7.2 0.6 9.6 0.3 9.3 2.7 6.7 1.3 5.3 3.1 5 5 3.2 4.7 1.6z" fill="#c8c8c8"/></svg>
<div style="left:1075px;top:186px;width:74px;height:362px;background:#000;"></div>
<div style="left:1075px;top:187px;width:73px;height:360px;background:#232323;"></div>
<div style="left:1075px;top:363px;width:73px;height:1px;background:#000;"></div>
<div style="left:311px;top:547px;width:838px;height:1px;background:#000;"></div>
<div style="left:311px;top:537px;width:837px;height:10px;background:#2e2e2e;"></div>
<svg style="left:1123px;top:538px;" width="10" height="7" viewBox="0 0 10 7"><path d="M1 6l4-4.5L9 6z" fill="#8a8a8a"/></svg>
<span class="t" style="left:1082.50px;top:188.00px;font-size:11px;color:#8c8c8c;font-weight:700;letter-spacing:-0.872px;">dB</span>
<span class="t" style="left:1082.50px;top:207.00px;font-size:11px;color:#8c8c8c;font-weight:700;letter-spacing:1.219px;">-3</span>
<span class="t" style="left:1082.50px;top:238.00px;font-size:11px;color:#8c8c8c;font-weight:700;letter-spacing:1.219px;">-9</span>
<span class="t" style="left:1082.50px;top:253.00px;font-size:11px;color:#8c8c8c;font-weight:700;letter-spacing:0.547px;">-15</span>
<span class="t" style="left:1082.50px;top:269.00px;font-size:12px;color:#8c8c8c;font-weight:700;">-∞</span>
<span class="t" style="left:1082.50px;top:285.00px;font-size:11px;color:#8c8c8c;font-weight:700;letter-spacing:0.547px;">-15</span>
<span class="t" style="left:1082.50px;top:300.00px;font-size:11px;color:#8c8c8c;font-weight:700;letter-spacing:1.219px;">-9</span>
<span class="t" style="left:1082.50px;top:331.00px;font-size:11px;color:#8c8c8c;font-weight:700;letter-spacing:1.219px;">-3</span>
<span class="t" style="left:1082.50px;top:365.00px;font-size:11px;color:#8c8c8c;font-weight:700;letter-spacing:-0.872px;">dB</span>
<span class="t" style="left:1082.50px;top:383.00px;font-size:11px;color:#8c8c8c;font-weight:700;letter-spacing:1.219px;">-3</span>
<span class="t" style="left:1082.50px;top:414.00px;font-size:11px;color:#8c8c8c;font-weight:700;letter-spacing:1.219px;">-9</span>
<span class="t" style="left:1082.50px;top:429.00px;font-size:11px;color:#8c8c8c;font-weight:700;letter-spacing:0.547px;">-15</span>
<span class="t" style="left:1082.50px;top:445.00px;font-size:12px;color:#8c8c8c;font-weight:700;">-∞</span>
<span class="t" style="left:1082.50px;top:460.00px;font-size:11px;color:#8c8c8c;font-weight:700;letter-spacing:0.547px;">-15</span>
<span class="t" style="left:1082.50px;top:476.00px;font-size:11px;color:#8c8c8c;font-weight:700;letter-spacing:1.219px;">-9</span>
<span class="t" style="left:1082.50px;top:507.00px;font-size:11px;color:#8c8c8c;font-weight:700;letter-spacing:1.219px;">-3</span>
<svg style="left:0px;top:0px;" width="1197" height="540" viewBox="0 0 1197 540"><path d="M1075 187.5h3.5M1075 362.5h3.5M1075 196.5h1.8M1075 352.5h1.8M1075 204.5h1.8M1075 344.5h1.8M1075 212.5h3.5M1075 336.5h3.5M1075 219.5h1.8M1075 329.5h1.8M1075 225.5h1.8M1075 323.5h1.8M1075 230.5h1.8M1075 318.5h1.8M1075 235.5h1.8M1075 313.5h1.8M1075 239.5h1.8M1075 309.5h1.8M1075 243.5h3.5M1075 305.5h3.5M1075 246.5h1.8M1075 302.5h1.8M1075 249.5h1.8M1075 299.5h1.8M1075 252.5h1.8M1075 296.5h1.8M1075 254.5h1.8M1075 294.5h1.8M1075 257.5h1.8M1075 291.5h1.8M1075 258.5h3.5M1075 290.5h3.5M1075 274.5h3.500M1075 364.5h3.5M1075 537.5h3.5M1075 372.5h1.8M1075 528.5h1.8M1075 380.5h1.8M1075 519.5h1.8M1075 388.5h3.5M1075 512.5h3.5M1075 394.5h1.8M1075 505.5h1.8M1075 400.5h1.8M1075 499.5h1.8M1075 406.5h1.8M1075 494.5h1.8M1075 411.5h1.8M1075 489.5h1.8M1075 415.5h1.8M1075 485.5h1.8M1075 419.5h3.5M1075 481.5h3.5M1075 422.5h1.8M1075 477.5h1.8M1075 425.5h1.8M1075 474.5h1.8M1075 428.5h1.8M1075 472.5h1.8M1075 430.5h1.8M1075 469.5h1.8M1075 432.5h1.8M1075 467.5h1.8M1075 434.5h3.5M1075 465.5h3.5M1075 450.5h3.500" stroke="#b0b0b0" stroke-width="1" fill="none"/></svg>
<div style="left:1075px;top:362px;width:6px;height:2px;background:#d0d0d0;"></div>
<div style="left:1124.5px;top:266.5px;width:21px;height:17px;background:#141414;border:1px solid #343434;border-radius:3px;box-sizing:border-box;"></div>
<span class="t" style="left:1132.50px;top:272.00px;font-size:10px;color:#3483e0;font-weight:700;">L</span>
<div style="left:1124.5px;top:443.0px;width:21px;height:17px;background:#141414;border:1px solid #343434;border-radius:3px;box-sizing:border-box;"></div>
<span class="t" style="left:1129.50px;top:448.00px;font-size:10px;color:#3483e0;font-weight:700;letter-spacing:0.438px;">K:</span>
<div style="left:1081px;top:162px;width:22px;height:22px;background:#141414;border:1px solid #343434;border-radius:3px;box-sizing:border-box;"></div>
<svg style="left:1085px;top:167px;" width="14" height="13" viewBox="0 0 14 13"><path d="M1 12V6.800a6 6 0 0 1 12 0V12H9.200V7a2.200 2.200 0 0 0-4.400 0v5z" fill="#2d8ceb"/><path d="M2 9.300h1.900v1.700H2zM10.100 9.300h1.900v1.700h-1.900z" fill="#141414"/></svg>
<svg style="left:1109px;top:165px;" width="10" height="16" viewBox="0 0 10 16"><path d="M0.500 1h8.500v3.200L6.400 7.200H3.100L0.500 4.200z" fill="#a8a8a8"/><path d="M4.750 7v8.500" stroke="#a8a8a8" stroke-width="1.600"/></svg>
<div class="clip" style="left:305px;top:548px;width:851px;height:36px;">
<span class="t" style="left:11.00px;top:12.00px;font-size:17px;color:#2d8ceb;font-weight:700;letter-spacing:-0.589px;">0:37.454</span>
</div>
<svg style="left:500px;top:556px;" width="110" height="17" viewBox="0 0 110 17"><rect x="2" y="3" width="11" height="11" fill="#b0b0b0"/><path d="M30 2.5v12l11-6z" fill="#b0b0b0"/><path d="M61 3v11M67 3v11" stroke="#b0b0b0" stroke-width="3"/><path d="M91.5 3v11" stroke="#b0b0b0" stroke-width="2"/><path d="M103 3l-9 5.500 9 5.500z" fill="#b0b0b0"/></svg>
<svg style="left:1029px;top:558px;" width="116" height="20" viewBox="0 0 116 20"><g fill="none" stroke="#b4b4b4" stroke-width="1.5"><path d="M3 3.5l3 5-3 5"/><circle cx="14.5" cy="7.5" r="4.6"/><path d="M18 11l4.5 5" stroke-width="2.2"/><path d="M32.500 3.500l-3 5 3 5M36 3.500l3 5-3 5"/><circle cx="46.500" cy="7.500" r="4.600"/><path d="M50 11l4.500 5" stroke-width="2.200"/><circle cx="73" cy="9.500" r="5.600"/><path d="M73 9.500V5M73 3.500V1.500M71 1.500h4M67 4l-2-2" stroke-width="1.600"/></g><g fill="none" stroke="#4c4c4c" stroke-width="1.400"><path d="M93 1.500h5M93 16.500h5M95.500 1.500v15"/><circle cx="104" cy="7.500" r="4.300"/><path d="M102 7.500h4M104 5.500v4M107.500 11l4 5" /></g></svg>
<div style="left:1160px;top:80px;width:36px;height:505px;background:#232323;"></div>
<div style="left:1161px;top:108px;width:33px;height:2px;background:#353535;"></div>
<div style="left:1161px;top:138px;width:33px;height:2px;background:#353535;"></div>
<div style="left:1161px;top:174px;width:33px;height:2px;background:#353535;"></div>
<div style="left:1161px;top:205px;width:33px;height:2px;background:#353535;"></div>
<div style="left:1161px;top:572px;width:33px;height:12px;background:#1f1f1f;border:1px solid #292929;box-sizing:border-box;"></div>
<div class="clip" style="left:1170px;top:86px;width:5px;height:16px;">
<span class="t" style="left:2.50px;top:3.00px;font-size:10.5px;color:#c8c8c8;font-weight:700;">С</span>
</div>
<div style="left:1175px;top:86px;width:1px;height:16px;background:#4a4a4a;"></div>
<div class="clip" style="left:1160px;top:110px;width:36px;height:60px;">
<span class="t" style="left:11.00px;top:12.00px;font-size:11px;color:#b4b4b4;font-weight:700;font-style:italic;letter-spacing:-0.922px;">Нет</span>
<span class="t" style="left:10.50px;top:42.00px;font-size:11px;color:#4c4c4c;">Пресеты</span>
</div>
<div style="left:305px;top:589px;width:558px;height:94px;background:#232323;"></div>
<span class="t" style="left:317.10px;top:598.00px;font-size:11px;color:#c0c0c0;font-weight:700;letter-spacing:-0.526px;">Уровни</span>
<svg style="left:364px;top:599px;" width="10" height="10" viewBox="0 0 10 10"><path d="M0.5 1.5h8M0.5 4.5h8M0.5 7.500h8" stroke="#b8b8b8" stroke-width="1"/></svg>
<div style="left:310px;top:622px;width:548px;height:41px;background:#1b1b1b;border:1px solid #000;box-sizing:border-box;"></div>
<div style="left:312px;top:623px;width:1px;height:19px;background:#ece65c;"></div>
<div style="left:312px;top:643px;width:1px;height:19px;background:#ece65c;"></div>
<div style="left:311px;top:623px;width:1px;height:39px;background:rgba(236,230,92,0.35);"></div>
<div style="left:313px;top:623px;width:1px;height:39px;background:rgba(236,230,92,0.2);"></div>
<span class="t" style="left:311.00px;top:670.00px;font-size:10px;color:#8f8f8f;">dB</span>
<span class="t" style="left:332.90px;top:670.00px;font-size:10px;color:#929292;font-weight:700;letter-spacing:-0.227px;">-57</span>
<span class="t" style="left:359.52px;top:670.00px;font-size:10px;color:#929292;font-weight:700;letter-spacing:-0.227px;">-54</span>
<span class="t" style="left:386.14px;top:670.00px;font-size:10px;color:#929292;font-weight:700;letter-spacing:-0.227px;">-51</span>
<span class="t" style="left:412.76px;top:670.00px;font-size:10px;color:#929292;font-weight:700;letter-spacing:-0.227px;">-48</span>
<span class="t" style="left:439.38px;top:670.00px;font-size:10px;color:#929292;font-weight:700;letter-spacing:-0.227px;">-45</span>
<span class="t" style="left:466.00px;top:670.00px;font-size:10px;color:#929292;font-weight:700;letter-spacing:-0.227px;">-42</span>
<span class="t" style="left:492.62px;top:670.00px;font-size:10px;color:#929292;font-weight:700;letter-spacing:-0.227px;">-39</span>
<span class="t" style="left:519.24px;top:670.00px;font-size:10px;color:#929292;font-weight:700;letter-spacing:-0.227px;">-36</span>
<span class="t" style="left:545.86px;top:670.00px;font-size:10px;color:#929292;font-weight:700;letter-spacing:-0.227px;">-33</span>
<span class="t" style="left:572.48px;top:670.00px;font-size:10px;color:#929292;font-weight:700;letter-spacing:-0.227px;">-30</span>
<span class="t" style="left:599.10px;top:670.00px;font-size:10px;color:#929292;font-weight:700;letter-spacing:-0.227px;">-27</span>
<span class="t" style="left:625.72px;top:670.00px;font-size:10px;color:#929292;font-weight:700;letter-spacing:-0.227px;">-24</span>
<span class="t" style="left:652.34px;top:670.00px;font-size:10px;color:#929292;font-weight:700;letter-spacing:-0.227px;">-21</span>
<span class="t" style="left:678.96px;top:670.00px;font-size:10px;color:#929292;font-weight:700;letter-spacing:-0.227px;">-18</span>
<span class="t" style="left:705.58px;top:670.00px;font-size:10px;color:#929292;font-weight:700;letter-spacing:-0.227px;">-15</span>
<span class="t" style="left:732.20px;top:670.00px;font-size:10px;color:#929292;font-weight:700;letter-spacing:-0.227px;">-12</span>
<span class="t" style="left:761.07px;top:670.00px;font-size:10px;color:#929292;font-weight:700;letter-spacing:0.594px;">-9</span>
<span class="t" style="left:787.69px;top:670.00px;font-size:10px;color:#929292;font-weight:700;letter-spacing:0.594px;">-6</span>
<span class="t" style="left:814.31px;top:670.00px;font-size:10px;color:#929292;font-weight:700;letter-spacing:0.594px;">-3</span>
<span class="t" style="left:843.28px;top:670.00px;font-size:10px;color:#929292;font-weight:700;">0</span>
<svg style="left:0px;top:0px;" width="1197" height="670" viewBox="0 0 1197 670"><path d="M339.7 663v4.500M330.8 663v2.500M322.0 663v2.500M366.3 663v4.500M357.5 663v2.500M348.6 663v2.500M392.9 663v4.500M384.1 663v2.500M375.2 663v2.500M419.6 663v4.500M410.7 663v2.500M401.9 663v2.500M446.2 663v4.500M437.3 663v2.500M428.5 663v2.500M472.8 663v4.500M463.9 663v2.500M455.1 663v2.500M499.4 663v4.500M490.6 663v2.500M481.7 663v2.500M526.0 663v4.500M517.2 663v2.500M508.3 663v2.500M552.7 663v4.500M543.8 663v2.500M535.0 663v2.500M579.3 663v4.500M570.4 663v2.500M561.6 663v2.500M605.9 663v4.500M597.0 663v2.500M588.2 663v2.500M632.5 663v4.500M623.7 663v2.500M614.8 663v2.500M659.1 663v4.500M650.3 663v2.500M641.4 663v2.500M685.8 663v4.500M676.9 663v2.500M668.1 663v2.500M712.4 663v4.500M703.5 663v2.500M694.7 663v2.500M739.0 663v4.500M730.1 663v2.500M721.3 663v2.500M765.6 663v4.500M756.8 663v2.500M747.9 663v2.500M792.2 663v4.500M783.4 663v2.500M774.5 663v2.500M818.9 663v4.500M810.0 663v2.500M801.2 663v2.500M845.5 663v4.500M836.6 663v2.500M827.8 663v2.500M313.500 663v4.500" stroke="#8a8a8a" stroke-width="1" fill="none"/></svg>
<div style="left:867px;top:589px;width:329px;height:94px;background:#232323;"></div>
<span class="t" style="left:1013.00px;top:623.00px;font-size:11px;color:#9c9c9c;font-weight:700;letter-spacing:-0.117px;">Конец</span>
<span class="t" style="left:1084.50px;top:623.00px;font-size:11px;color:#9c9c9c;font-weight:700;letter-spacing:-0.589px;">Продолжительность</span>
<span class="t" style="left:1015.50px;top:642.00px;font-size:11px;color:#2d8ceb;font-weight:700;letter-spacing:-0.205px;">0:37.454</span>
<span class="t" style="left:1085.50px;top:642.00px;font-size:11px;color:#2d8ceb;font-weight:700;letter-spacing:-0.134px;">0:00.000</span>
<span class="t" style="left:878.50px;top:663.00px;font-size:11px;color:#9c9c9c;font-weight:700;letter-spacing:-0.952px;">Вид</span>
<span class="t" style="left:943.20px;top:663.00px;font-size:11px;color:#2d8ceb;font-weight:700;letter-spacing:-0.234px;">0:00.000</span>
<span class="t" style="left:1015.00px;top:663.00px;font-size:11px;color:#2d8ceb;font-weight:700;letter-spacing:-0.205px;">3:00.399</span>
<span class="t" style="left:1085.50px;top:663.00px;font-size:11px;color:#2d8ceb;font-weight:700;letter-spacing:-0.134px;">3:00.399</span>
<div style="left:1px;top:683px;width:1195px;height:2px;background:#111;"></div>
<div style="left:1px;top:685px;width:1195px;height:20px;background:#232323;"></div>
<span class="t" style="left:9.10px;top:690.00px;font-size:11.5px;color:#a6a6a6;letter-spacing:-0.264px;">Применить Усиление выполнено за 0,26 секунд</span>
<div style="left:469px;top:688px;width:1px;height:14px;background:#323232;"></div>
<div style="left:519px;top:688px;width:1px;height:14px;background:#323232;"></div>
<div style="left:913.5px;top:688px;width:1px;height:14px;background:#323232;"></div>
<div style="left:973px;top:688px;width:1px;height:14px;background:#323232;"></div>
<div style="left:1039.5px;top:688px;width:1px;height:14px;background:#323232;"></div>
<div style="left:1147.5px;top:688px;width:1px;height:14px;background:#323232;"></div>
<span class="t" style="left:648.90px;top:691.00px;font-size:11.5px;color:#a6a6a6;letter-spacing:-0.233px;">44100 Гц ● 32-бит (с плавающей точкой) ● Стерео</span>
<span class="t" style="left:921.30px;top:691.00px;font-size:11.5px;color:#a6a6a6;letter-spacing:-0.320px;">69,31 мБ</span>
<span class="t" style="left:990.50px;top:691.00px;font-size:11.5px;color:#a6a6a6;letter-spacing:-0.467px;">3:26.001</span>
<span class="t" style="left:1047.90px;top:691.00px;font-size:11.5px;color:#a6a6a6;letter-spacing:-0.312px;">26,24 Гб свободно</span>
<div style="left:220px;top:50px;width:412px;height:518px;background:#f2f2f2;border:1px solid #e2e2e2;border-top-color:#d0d0d0;box-sizing:border-box;box-shadow:1px 1px 2px rgba(0,0,0,0.25);"></div>
<span class="t" style="left:255.10px;top:58.00px;font-size:12px;color:#000000;letter-spacing:-0.163px;">Показать Набор эффектов</span>
<span class="t" style="left:582.00px;top:58.00px;font-size:12px;color:#000000;letter-spacing:0.453px;">Alt+0</span>
<span class="t" style="left:255.10px;top:80.00px;font-size:12px;color:#7c7c7c;letter-spacing:-0.192px;">Редактировать эффекты клипа в Наборе эффектов</span>
<span class="t" style="left:255.10px;top:102.00px;font-size:12px;color:#7c7c7c;letter-spacing:-0.165px;">Редактировать эффект дорожки в Наборе эффектов</span>
<div style="left:250.6px;top:122px;width:378.4px;height:1px;background:#d7d7d7;"></div>
<span class="t" style="left:255.10px;top:131.00px;font-size:12px;color:#000000;letter-spacing:-0.053px;">Инвертировать</span>
<span class="t" style="left:255.10px;top:153.00px;font-size:12px;color:#000000;letter-spacing:-0.179px;">Обратить</span>
<span class="t" style="left:255.10px;top:175.00px;font-size:12px;color:#7c7c7c;letter-spacing:0.392px;">Тишина</span>
<span class="t" style="left:255.10px;top:197.00px;font-size:12px;color:#000000;letter-spacing:-0.072px;">Генерировать</span>
<svg style="left:615px;top:198px;" width="6" height="10" viewBox="0 0 6 10"><path d="M1 1l3.300 3.400L1 7.800" fill="none" stroke="#202020" stroke-width="1.300"/></svg>
<div style="left:250.6px;top:217px;width:378.4px;height:1px;background:#d7d7d7;"></div>
<span class="t" style="left:255.10px;top:226.00px;font-size:12px;color:#000000;letter-spacing:0.017px;">Подгонка звука</span>
<span class="t" style="left:255.10px;top:248.00px;font-size:12px;color:#7c7c7c;letter-spacing:-0.100px;">Автоисправление выделения</span>
<span class="t" style="left:576.00px;top:248.00px;font-size:12px;color:#7c7c7c;letter-spacing:0.231px;">Ctrl+U</span>
<div style="left:250.6px;top:268px;width:378.4px;height:1px;background:#d7d7d7;"></div>
<span class="t" style="left:255.10px;top:277.00px;font-size:12px;color:#000000;letter-spacing:-0.052px;">Амплитуда и сжатие</span>
<svg style="left:615px;top:278px;" width="6" height="10" viewBox="0 0 6 10"><path d="M1 1l3.300 3.400L1 7.800" fill="none" stroke="#202020" stroke-width="1.300"/></svg>
<span class="t" style="left:255.10px;top:299.00px;font-size:12px;color:#000000;letter-spacing:-0.279px;">Задержка и Эхо</span>
<svg style="left:615px;top:300px;" width="6" height="10" viewBox="0 0 6 10"><path d="M1 1l3.300 3.400L1 7.800" fill="none" stroke="#202020" stroke-width="1.300"/></svg>
<span class="t" style="left:255.10px;top:321.00px;font-size:12px;color:#000000;letter-spacing:0.082px;">Диагностика</span>
<svg style="left:615px;top:322px;" width="6" height="10" viewBox="0 0 6 10"><path d="M1 1l3.300 3.400L1 7.800" fill="none" stroke="#202020" stroke-width="1.300"/></svg>
<span class="t" style="left:255.10px;top:343.00px;font-size:12px;color:#000000;letter-spacing:-0.174px;">Фильтр и ЭКВ</span>
<svg style="left:615px;top:344px;" width="6" height="10" viewBox="0 0 6 10"><path d="M1 1l3.300 3.400L1 7.800" fill="none" stroke="#202020" stroke-width="1.300"/></svg>
<span class="t" style="left:255.10px;top:365.00px;font-size:12px;color:#000000;letter-spacing:0.068px;">Модуляция</span>
<svg style="left:615px;top:366px;" width="6" height="10" viewBox="0 0 6 10"><path d="M1 1l3.300 3.400L1 7.800" fill="none" stroke="#202020" stroke-width="1.300"/></svg>
<div style="left:223px;top:382px;width:406px;height:22px;background:#91c9f7;"></div>
<span class="t" style="left:255.10px;top:387.00px;font-size:12px;color:#000000;letter-spacing:0.090px;">Шумопонижение / Восстановление</span>
<svg style="left:615px;top:388px;" width="6" height="10" viewBox="0 0 6 10"><path d="M1 1l3.300 3.400L1 7.800" fill="none" stroke="#202020" stroke-width="1.300"/></svg>
<span class="t" style="left:255.10px;top:409.00px;font-size:12px;color:#000000;letter-spacing:-0.260px;">Реверберация (Reverb)</span>
<svg style="left:615px;top:410px;" width="6" height="10" viewBox="0 0 6 10"><path d="M1 1l3.300 3.400L1 7.800" fill="none" stroke="#202020" stroke-width="1.300"/></svg>
<span class="t" style="left:255.10px;top:431.00px;font-size:12px;color:#000000;letter-spacing:0.014px;">Особые</span>
<svg style="left:615px;top:432px;" width="6" height="10" viewBox="0 0 6 10"><path d="M1 1l3.300 3.400L1 7.800" fill="none" stroke="#202020" stroke-width="1.300"/></svg>
<span class="t" style="left:255.10px;top:453.00px;font-size:12px;color:#000000;letter-spacing:-0.317px;">Эффекты для стерео базы</span>
<svg style="left:615px;top:454px;" width="6" height="10" viewBox="0 0 6 10"><path d="M1 1l3.300 3.400L1 7.800" fill="none" stroke="#202020" stroke-width="1.300"/></svg>
<span class="t" style="left:255.10px;top:475.00px;font-size:12px;color:#000000;letter-spacing:0.023px;">Время и Тон</span>
<svg style="left:615px;top:476px;" width="6" height="10" viewBox="0 0 6 10"><path d="M1 1l3.300 3.400L1 7.800" fill="none" stroke="#202020" stroke-width="1.300"/></svg>
<div style="left:250.6px;top:495px;width:378.4px;height:1px;background:#d7d7d7;"></div>
<span class="t" style="left:255.10px;top:505.00px;font-size:11px;color:#000000;letter-spacing:-0.603px;">VST</span>
<svg style="left:615px;top:505px;" width="6" height="10" viewBox="0 0 6 10"><path d="M1 1l3.300 3.400L1 7.800" fill="none" stroke="#202020" stroke-width="1.300"/></svg>
<span class="t" style="left:255.10px;top:527.00px;font-size:11px;color:#000000;letter-spacing:-0.244px;">VST 3</span>
<svg style="left:615px;top:527px;" width="6" height="10" viewBox="0 0 6 10"><path d="M1 1l3.300 3.400L1 7.800" fill="none" stroke="#202020" stroke-width="1.300"/></svg>
<span class="t" style="left:255.10px;top:548.00px;font-size:12px;color:#000000;letter-spacing:-0.038px;">Менеджер аудио плагинов...</span>
<div style="left:626px;top:379px;width:406px;height:291px;background:#f2f2f2;border:1px solid #e2e2e2;border-top-color:#d0d0d0;box-sizing:border-box;box-shadow:1px 1px 2px rgba(0,0,0,0.25);"></div>
<span class="t" style="left:661.00px;top:387.00px;font-size:12px;color:#7c7c7c;letter-spacing:-0.137px;">Захват образца шума</span>
<span class="t" style="left:971.50px;top:387.00px;font-size:12px;color:#7c7c7c;letter-spacing:0.161px;">Shift+P</span>
<span class="t" style="left:661.00px;top:409.00px;font-size:12px;color:#000000;letter-spacing:0.116px;">Шумопонижение (процесс)...</span>
<span class="t" style="left:944.50px;top:409.00px;font-size:12px;color:#000000;letter-spacing:0.209px;">Ctrl+Shift+P</span>
<div style="left:656.5px;top:429px;width:372.5px;height:1px;background:#d7d7d7;"></div>
<span class="t" style="left:661.00px;top:438.00px;font-size:12px;color:#7c7c7c;letter-spacing:-0.019px;">Узнать звуковую модель</span>
<span class="t" style="left:661.00px;top:460.00px;font-size:12px;color:#000000;letter-spacing:-0.028px;">Удаление повторяющихся звуков (процесс)...</span>
<div style="left:656.5px;top:480px;width:372.5px;height:1px;background:#d7d7d7;"></div>
<span class="t" style="left:661.00px;top:489.00px;font-size:12px;color:#000000;letter-spacing:0.033px;">Удалить щелчки и хлопки (процесс)...</span>
<span class="t" style="left:661.00px;top:511.00px;font-size:12px;color:#000000;letter-spacing:0.100px;">Понижение шипения (процесс)...</span>
<div style="left:656.5px;top:531px;width:372.5px;height:1px;background:#d7d7d7;"></div>
<span class="t" style="left:661.00px;top:540.00px;font-size:12px;color:#000000;letter-spacing:-0.281px;">DeNoise...</span>
<span class="t" style="left:661.00px;top:562.00px;font-size:12px;color:#000000;letter-spacing:0.017px;">Адаптивное Шумопонижение...</span>
<span class="t" style="left:661.00px;top:584.00px;font-size:12px;color:#000000;letter-spacing:-0.011px;">Автоудаление щелчков...</span>
<span class="t" style="left:661.00px;top:606.00px;font-size:12px;color:#000000;letter-spacing:-0.094px;">Аавтокоррекция фазы ...</span>
<span class="t" style="left:661.00px;top:628.00px;font-size:12px;color:#000000;letter-spacing:0.081px;">DeHummer...</span>
<span class="t" style="left:661.00px;top:650.00px;font-size:12px;color:#000000;letter-spacing:-0.453px;">DeReverb...</span>
<div style="left:0px;top:0px;width:1197px;height:1px;background:#1883d7;"></div>
<div style="left:0px;top:0px;width:1px;height:706px;background:#1883d7;"></div>
<div style="left:1196px;top:0px;width:1px;height:706px;background:#1883d7;"></div>
<div style="left:0px;top:705px;width:1197px;height:1px;background:#1883d7;"></div>
</div>
</body></html>
